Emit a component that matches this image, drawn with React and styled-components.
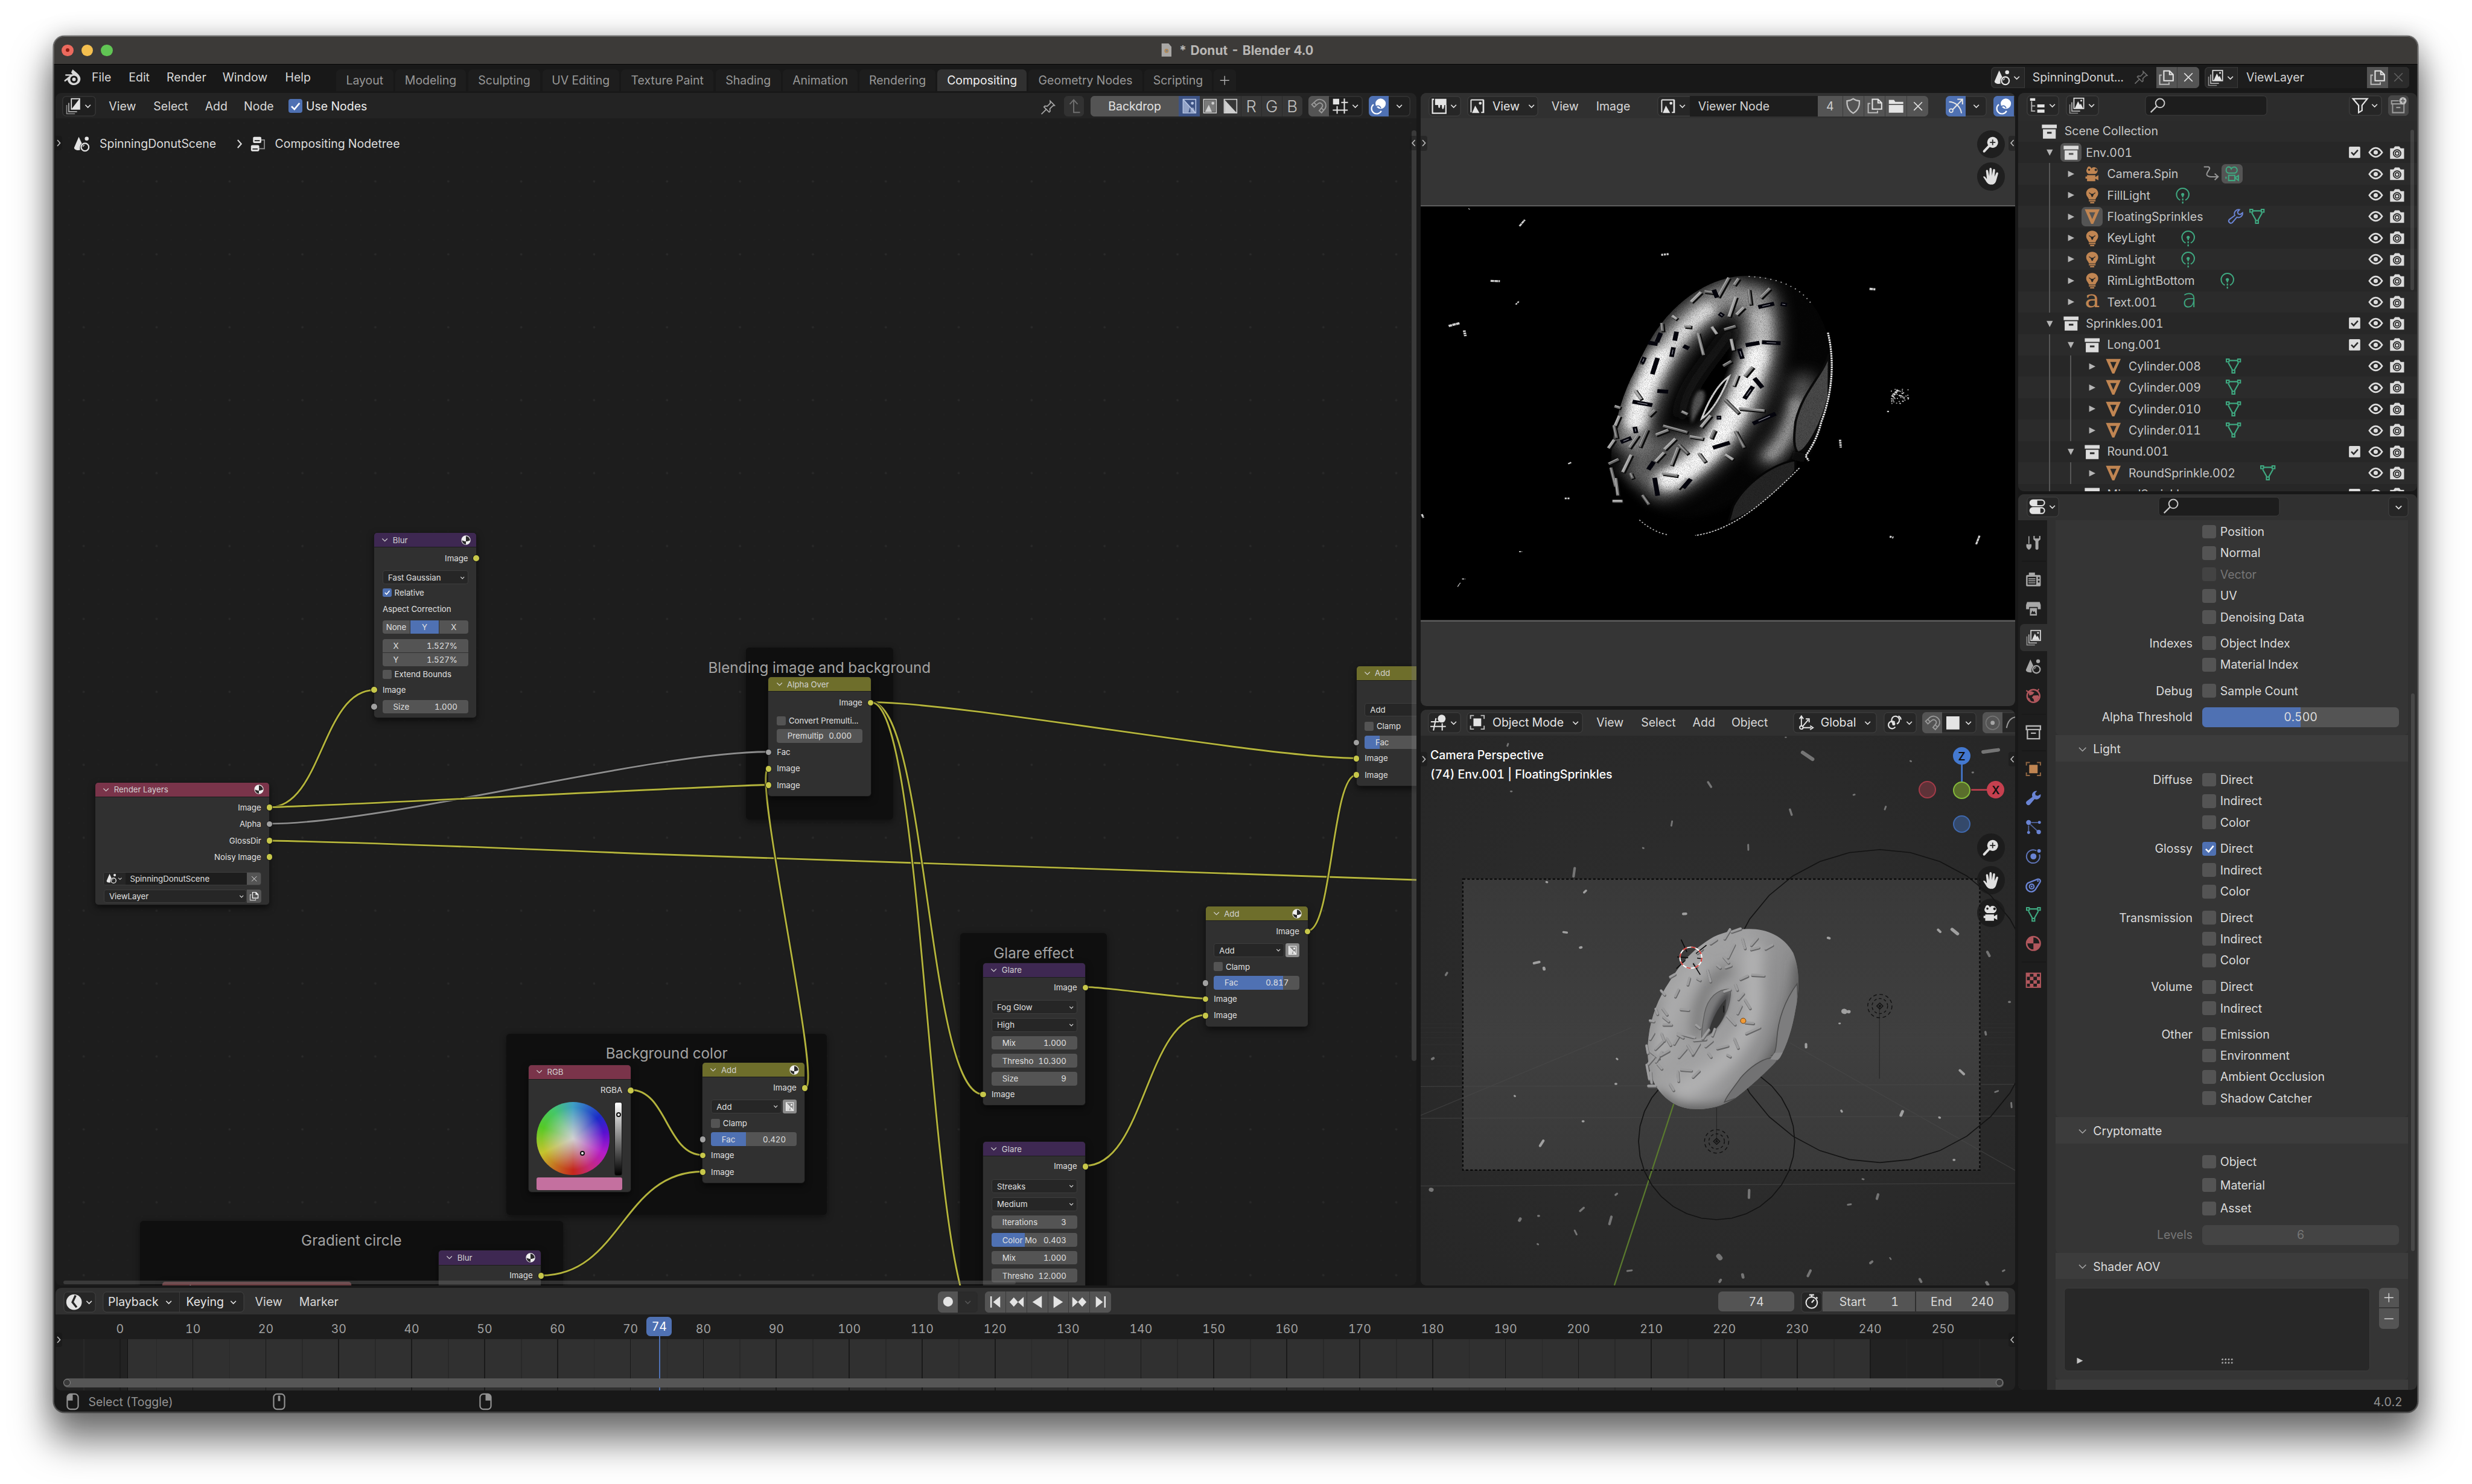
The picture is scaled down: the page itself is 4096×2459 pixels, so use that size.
import React from "react";
import styled, { createGlobalStyle } from "styled-components";

/* ---------- palette ---------- */
const BLUE = "#4f71b3";
const BTN = "#545454";
const TXT = "#dcdcdc";
const YEL = "#c7c74a";
const GRY = "#a1a1a1";
const ORANGE = "#c08552";
const GREEN = "#3fa981";
const INDIGO = "#6a84d4";
const RED = "#b1575d";

const Global = createGlobalStyle`
  html, body { margin: 0; background: #fff; overflow: hidden; }
  *, *::before, *::after { box-sizing: border-box; }
`;

const Desktop = styled.div`
  zoom: 0.805;
  width: 5089px;
  height: 3055px;
  padding: 74px 111px;
  overflow: hidden;
  background: #fff;
  font-family: Inter, "Liberation Sans", sans-serif;
  font-size: 24.2px;
  font-variant-numeric: tabular-nums;
  color: ${TXT};
  white-space: nowrap;
`;
const Win = styled.div`
  position: relative;
  display: flex;
  flex-direction: column;
  width: 4866px;
  height: 2833px;
  border-radius: 22px;
  background: #181818;
  box-shadow: 0 0 0 2px rgba(0, 0, 0, 0.45), 0 0 50px rgba(0, 0, 0, 0.22), 0 52px 74px 8px rgba(0, 0, 0, 0.52);
  &::after {
    content: "";
    position: absolute;
    inset: 0;
    border: 2px solid rgba(255, 255, 255, 0.2);
    border-radius: 22px;
    pointer-events: none;
  }
`;
const TitleBar = styled.div`
  display: flex;
  align-items: center;
  height: 59px;
  padding: 1px 16px 0;
  gap: 16.5px;
  background: #3c3a38;
  border-bottom: 2px solid #050505;
  border-radius: 22px 22px 0 0;
`;
const Light = styled.div`
  display: flex;
  align-items: center;
  justify-content: center;
  width: 24px;
  height: 24px;
  border-radius: 50%;
  background: ${(p) => p.$c};
  &::after {
    content: "";
    width: 8px;
    height: 8px;
    border-radius: 50%;
    background: ${(p) => p.$dot || "transparent"};
  }
`;
const Title = styled.div`
  display: flex;
  align-items: center;
  gap: 12px;
  margin-left: 2139px;
  font-weight: 700;
  font-size: 26px;
  color: #b9b7b5;
`;
const TopBar = styled.div`
  display: flex;
  align-items: flex-start;
  height: 55px;
  padding-top: 5px;
`;
const MenuText = styled.div`
  display: flex;
  align-items: center;
  height: 43px;
  width: ${(p) => (p.$w ? p.$w + "px" : "auto")};
  margin-left: ${(p) => p.$ml || 0}px;
  color: ${(p) => p.$c || "#d8d8d8"};
  flex: none;
`;
const Tab = styled.div`
  display: flex;
  align-items: center;
  justify-content: center;
  height: 45px;
  margin: 5px 4px 0 0;
  width: ${(p) => p.$w - 4}px;
  border-radius: 8px 8px 0 0;
  background: ${(p) => (p.$on ? "#303030" : "#1d1d1d")};
  color: ${(p) => (p.$on ? "#f0f0f0" : "#989898")};
  flex: none;
`;
const Fill = styled.div`
  flex: 1;
`;
const Main = styled.div`
  display: flex;
  gap: 6px;
  padding: 3px 2px 0 3px;
  height: 2674px;
`;
const Col = styled.div`
  display: flex;
  flex-direction: column;
  gap: ${(p) => p.$gap}px;
  width: ${(p) => p.$w}px;
  flex: none;
`;
const Row = styled.div`
  display: flex;
  gap: ${(p) => p.$gap || 0}px;
  height: ${(p) => (p.$h ? p.$h + "px" : "auto")};
`;
const Area = styled.section`
  position: relative;
  display: flex;
  flex-direction: column;
  width: ${(p) => p.$w}px;
  height: ${(p) => p.$h}px;
  background: ${(p) => p.$bg};
  border-radius: 12px;
  overflow: hidden;
  flex: none;
`;
const Header = styled.header`
  position: relative;
  z-index: 3;
  display: flex;
  align-items: flex-start;
  height: ${(p) => p.$h || 53}px;
  padding: ${(p) => p.$pt || 6}px 0 0 0;
  background: ${(p) => p.$bg};
  flex: none;
`;
const Group = styled.div`
  display: flex;
  height: 43px;
  width: ${(p) => p.$w}px;
  margin-left: ${(p) => p.$ml || 0}px;
  border-radius: 8px;
  overflow: hidden;
  background: ${(p) => p.$bg || "#262626"};
  box-shadow: inset 0 0 0 2px ${(p) => p.$line || "#3b3b3b"};
  flex: none;
`;
const Seg = styled.div`
  display: flex;
  align-items: center;
  justify-content: ${(p) => p.$j || "center"};
  gap: ${(p) => p.$gap ?? 4}px;
  height: 100%;
  width: ${(p) => p.$w}px;
  padding: 0 ${(p) => p.$px || 0}px;
  background: ${(p) => p.$bg || "transparent"};
  color: ${(p) => p.$c || "#e4e4e4"};
  border-right: ${(p) => (p.$div ? "2px solid #3b3b3b" : "0")};
  flex: none;
`;
const Check = styled.div`
  display: flex;
  align-items: center;
  justify-content: center;
  width: ${(p) => p.$s}px;
  height: ${(p) => p.$s}px;
  margin-left: ${(p) => p.$ml || 0}px;
  border-radius: ${(p) => (p.$s > 20 ? 5 : 3)}px;
  background: ${(p) => (p.$on ? BLUE : "#545454")};
  opacity: ${(p) => (p.$dim ? 0.45 : 1)};
  color: #fff;
  flex: none;
`;

/* ---------- icons (16 unit grid) ---------- */
const Svg = styled.svg`
  display: block;
  width: ${(p) => p.$s}px;
  height: ${(p) => p.$s}px;
  overflow: visible;
  flex: none;
`;
const S = { fill: "none", stroke: "currentColor", strokeWidth: 1 };
const F = { fill: "currentColor" };
const stack = (
  <>
    <path {...S} d="M3.5 5v8.5h8" opacity=".75" />
    <path {...S} d="M1.5 7v8.5h8" opacity=".55" />
  </>
);
const ICONS = {
  down: <path {...S} strokeWidth="1.7" d="M3.5 6 8 10.5 12.5 6" />,
  chev: <path {...S} strokeWidth="1.6" d="M2 5l6 6 6-6" />,
  left: <path {...S} strokeWidth="1.6" d="M10.5 3 6 8l4.5 5" />,
  right: <path {...S} strokeWidth="1.6" d="M6 3l4.500 5L6 13" />,
  check: <path {...S} strokeWidth="2.2" d="M2.500 8.500 6.500 12.500 13.500 4" />,
  x: <path {...S} strokeWidth="1.1" d="M3.500 3.500l9 9M12.500 3.500l-9 9" />,
  plus: <path {...S} strokeWidth="1.2" d="M8 1.500v13M1.500 8h13" />,
  minus: <path {...S} strokeWidth="1.2" d="M1.500 8h13" />,
  triR: <path {...F} d="M4 3.500 13 8 4 12.500z" />,
  triD: <path {...F} d="M3.500 4h9L8 13z" />,
  logo: (
    <>
      <path {...F} d="M8.200.6 10 2.100C14 5 15.700 7.500 15.500 10c-.3 3.200-3 5.300-6.100 5.300-3 0-5.700-2-6-5L.8 12.200.2 11l5.400-4.400H1.300V5.200h6.800L6.800 3.400z" />
      <circle cx="9.400" cy="10" r="3.500" fill="#181818" />
      <circle cx="9.400" cy="10" r="1.700" {...F} />
    </>
  ),
  comp: (
    <>
      {stack}
      <path {...F} fillRule="evenodd" d="M5.500.5h9v11h-9zM6.500 1.500v9l7-9z" />
    </>
  ),
  layers: (
    <>
      {stack}
      <rect {...S} x="5.500" y="1" width="9.500" height="10" />
      <path {...F} d="M6.500 10.500 9.500 4l1.800 3.500.9-1.200 2 4.200z" />
      <circle {...F} cx="12.600" cy="3.400" r=".9" />
    </>
  ),
  scene: (
    <>
      <path {...F} d="M5 1 8 7.500C6.300 9 5.700 11 6.300 13.800 3 14.400.5 13.300.5 11.500z" />
      <circle {...F} cx="12.700" cy="2.800" r="1.900" />
      <circle {...S} strokeWidth="1.300" cx="11" cy="11" r="3.700" />
      <path {...S} strokeWidth=".8" d="M9 10.600a2 2 0 0 1 1.600-1.600" />
    </>
  ),
  ntree: (
    <>
      <rect {...F} x="2.500" y="1" width="8" height="6" rx="1.200" />
      <rect {...F} x=".5" y="9" width="8" height="6" rx="1.200" />
      <path stroke="#1d1d1d" d="M4 4.800h5M2 12.800h5" />
      <path {...S} d="M10.500 4h3v8.500h-5" opacity=".6" />
    </>
  ),
  pin: (
    <path {...S} strokeWidth="1.100" d="M10 1.500l4.500 4.500-1.800.4-3 3 .2 2.600-1 .9L3.600 7.600l.9-1 2.600.2 3-3zM6 10 1 15" />
  ),
  up: <path {...S} strokeWidth="1.200" d="M14 14.500H7.500V2M3.500 6l4-4.500 4 4.500" />,
  imgAlpha: (
    <>
      <rect {...S} x="1.500" y="1" width="13" height="14" />
      <path {...F} d="M2 2v12.500h5L8.500 9 7 7zM9 10l3-.500L14 14.500H9z" opacity=".7" />
      <path {...S} d="M2 1.500 14 15" />
      <circle {...F} cx="11" cy="5" r="1.500" />
    </>
  ),
  imgColor: (
    <>
      <rect {...S} x="1.500" y="1" width="13" height="14" />
      <rect {...F} x="2.500" y="2" width="11" height="12" opacity=".45" />
      <path {...F} d="M3 14 6.800 6.500 10 14z" />
      <circle {...F} cx="11" cy="5" r="1.500" />
    </>
  ),
  alpha: (
    <>
      <rect {...S} x="1.500" y="1" width="13" height="14" />
      <path {...F} d="M2 1.500 14.500 15H2z" />
    </>
  ),
  magnet: (
    <path {...S} strokeWidth="1.100" d="M1.500 6.500 6 2.500a6 6 0 0 1 8.500 7.800L11 14.500l-2.300-2L11.500 9A2.600 2.600 0 0 0 7.800 5.500L3.800 9zM3.600 4.600l2.200 2.300M10.700 10l2.400 2" />
  ),
  snapgrid: (
    <>
      <path {...S} strokeWidth="1.200" d="M12 .8v14.500M5 8v7.500M.8 12h14.500M9 4.500h6.500" />
      <rect {...F} x="1" y="1" width="6" height="5.500" />
    </>
  ),
  overlay: (
    <>
      <circle {...F} cx="10.300" cy="5.700" r="5" />
      <path {...S} strokeWidth="1.300" d="M3.500 6.500a5 5 0 1 0 7.500 6.200" />
      <path stroke="#4f71b3" strokeWidth="1" fill="none" d="M5.500 9c1.500-2 4-1.500 5 1" />
    </>
  ),
  imgEd: (
    <>
      <path {...S} strokeWidth="1.300" d="M3 1.500H1.500v13.500h13V7" />
      <path {...F} d="M4 1h11v6h-2c-.3 3-.8 4-1.500 4s-.8-1.500-1-4H9c0 2-.4 3-1 3s-1-1-1-3H4z" />
    </>
  ),
  img: (
    <>
      <path {...S} strokeWidth="1.200" d="M3.500 1.500H14v13h-2M1.500 4v10.500M1.500 1.500V4M1.500 1.500h3M14.500 1.500v13H12" />
      <path {...F} d="M2.500 15 5.800 7.500 10.200 15z" />
      <circle {...F} cx="11" cy="5" r="1.500" />
    </>
  ),
  shield: <path {...S} strokeWidth="1.300" d="M8 1C6 2.500 4 3 2 3c-.3 5 1.500 9.500 6 12 4.500-2.500 6.300-7 6-12-2 0-4-.5-6-2z" opacity=".75" />,
  dup: (
    <>
      <path {...S} strokeWidth="1.200" d="M5.500 1.500h5.500l3.500 3.500v6h-9zM11 1.500V5h3.500" />
      <path {...S} strokeWidth="1.200" d="M3.500 5.500h-2v9h9v-2" opacity=".7" />
    </>
  ),
  folder: <path {...F} d="M1 2h5l1.200 2H15v2H1zM1 7h14v7.500H1z" />,
  gizmo: (
    <>
      <path {...S} strokeWidth="1.200" d="M3.500 13 14 2M9.500 1.500H14.500V6.500M1.500 4c6 0 11 4.500 12 11" />
      <circle {...S} fill={BLUE} cx="3.500" cy="12.500" r="1.700" />
    </>
  ),
  zoom: (
    <>
      <circle {...F} cx="9.800" cy="6" r="5" />
      <path {...S} strokeWidth="2.200" strokeLinecap="round" d="M6.300 9.600 2 14.200" />
      <path stroke="#262626" strokeWidth="1" d="M9.800 3.500v5M7.300 6h5" />
    </>
  ),
  hand: (
    <path {...F} d="M1 8.500c1-.7 2 0 2.500 1l.9 1L3.600 3.500c-.1-1.400 1.700-1.500 1.900-.2L6.500 8 6.700 1.700c0-1.500 1.900-1.500 2 0l.2 6 .9-5.200c.2-1.300 2-1.100 1.900.3l-.5 5.700 1.500-3.300c.5-1.100 2-.5 1.700.7l-1.600 5.600c-.7 2.600-2 4-4.500 4-2.700 0-4-1.600-5-3.500z" />
  ),
  cam: (
    <>
      <path {...F} fillRule="evenodd" d="M4.500 1a2.800 2.800 0 0 1 2.700 2 3.400 3.400 0 1 1 3.800 5.300H4.500A3.300 3.300 0 0 1 3 3.200 2.900 2.900 0 0 1 4.500 1zM5 3.200a1 1 0 1 0 .01 0zM11.500 3.200a1.200 1.200 0 1 0 .01 0z" />
      <path {...F} d="M3 9.500h8v1.700l3-1.700v5l-3-1.700v2.500H3v-2.500H1.500v-2H3z" />
    </>
  ),
  camData: (
    <path {...S} strokeWidth="1.200" d="M4.500 1.500c1.300 0 2.200.8 2.600 1.900a3 3 0 1 1 3.700 4.100H4.300A2.700 2.700 0 0 1 2.200 4.200 2.600 2.600 0 0 1 4.500 1.500zM5 4.500h.1M11 4.500h.1M4.500 9.700h6v5h-6zM10.500 12l3.500-2v4.500zM2 11v2" />
  ),
  outl: (
    <>
      <path {...F} d="M1 1h5v2.500H1zM8 7h7v3H8zM8 12h7v3H8z" />
      <path {...S} strokeWidth="1.200" d="M2.500 4v9.500H6M2.500 8.500H6" opacity=".7" />
    </>
  ),
  search: (
    <>
      <circle {...S} strokeWidth="1.200" cx="10" cy="5.800" r="4.300" />
      <path {...S} strokeWidth="1.300" d="M6.700 9 1 14.700" />
    </>
  ),
  filter: <path {...S} strokeWidth="1.300" d="M1 1.500h14L9.800 8v5L6.500 15V8z" />,
  newcol: (
    <>
      <path {...S} strokeWidth="1.200" d="M8 3.500H1v3h13M2 6.500V15h11V6.500M5.500 10h4" opacity=".7" />
      <circle {...F} cx="12" cy="3.500" r="3.500" />
      <path stroke="#545454" d="M12 1.500v4M10 3.500h4" />
    </>
  ),
  coll: (
    <path {...F} fillRule="evenodd" d="M.8 1.500h14.400v3.500H.8zM1.800 6h12.400v9H1.800zM5.800 8.500v1.700h4.400V8.500z" />
  ),
  collO: <path {...S} strokeWidth="1.400" d="M1 1.800h14v3.500H1zM2 5.500v9h12v-9M5.500 9h5" />,
  bulb: (
    <>
      <path {...F} fillRule="evenodd" d="M8 .8c3.300 0 5.800 2.300 5.800 5.200 0 2.700-1.800 3.600-2.600 6H4.800C4 9.600 2.200 8.700 2.200 6 2.200 3.100 4.700.8 8 .8zM5 5v1l1.500 1 1 2.500h1L9.500 7 11 6V5l-2 1.500H7z" />
      <path {...F} d="M4.800 12.600h6.400v1.300H4.800zM6 14.500h4v1.300H6z" />
    </>
  ),
  lampData: (
    <>
      <path {...S} strokeWidth="1.200" d="M5.500 12.600a6 6 0 1 1 5 0" />
      <circle {...F} cx="8" cy="7.200" r="1.500" />
      <path {...S} strokeWidth="1.300" strokeDasharray="2 1" d="M8 8v8" />
    </>
  ),
  tri: <path {...F} fillRule="evenodd" d="M.8 1h14.400L9 15.200H7zM5 3.900 8 10.500l3-6.600z" />,
  mesh: (
    <>
      <path {...S} strokeWidth="1.300" d="M4 2.500h8M3 4.500 7.200 12M13 4.500 8.800 12" />
      <path {...S} strokeWidth="1.200" d="M1.200 1.200h2.600v2.600H1.200zM12.200 1.200h2.600v2.600h-2.600zM6.700 12h2.600v2.600H6.700z" />
    </>
  ),
  wrenchO: (
    <path {...S} strokeWidth="1.200" d="M14.500 4.500a4 4 0 0 1-5.500 4.200L4.500 14A2.100 2.100 0 0 1 1.600 11L7 7a4 4 0 0 1 4.500-5.600L9.700 3.500l.6 2 2 .6z" />
  ),
  wrench: (
    <path {...F} d="M15.200 4.200a4.300 4.300 0 0 1-6 4.800L4.600 14.400A2.200 2.200 0 0 1 1.400 11.200L7 7a4.300 4.300 0 0 1 4.600-6L9.700 3.200l.5 2.100 2.200.6z" />
  ),
  path: <path {...S} strokeWidth="1.200" d="M1 1.500h4.500C9 3 2.500 7 4 9.500c1.500 2.300 5 1.500 10.500 1.500M11.500 8l3.300 3-3.300 3.200" opacity=".8" />,
  eye: (
    <>
      <path {...S} strokeWidth="1.700" d="M1.200 8C3.500 4.500 5.500 3.300 8 3.300S12.500 4.500 14.800 8C12.500 11.500 10.500 12.700 8 12.700S3.500 11.500 1.200 8z" />
      <circle {...F} cx="8" cy="8" r="2.300" />
    </>
  ),
  photo: (
    <>
      <path {...F} d="M.8 3.500h3.500L5.800 1.500h4.400l1.500 2h3.500v11H.8z" />
      <circle cx="8" cy="8.800" r="3.800" fill="none" stroke="#2a2a2a" strokeWidth="1.100" />
      <circle cx="8" cy="8.800" r="1.900" fill="none" stroke="#2a2a2a" strokeWidth="1" />
    </>
  ),
  boxcheck: (
    <>
      <rect {...F} x="2" y="2" width="12" height="12" rx="1" />
      <path stroke="#2a2a2a" strokeWidth="1.600" fill="none" d="M4.500 8l2.500 2.500 4.500-5" />
    </>
  ),
  propEd: (
    <>
      <rect {...S} strokeWidth="1.200" x="1" y="1.500" width="14" height="5.500" rx="2.700" />
      <path {...F} d="M3.700 1.500H8v5.500H3.700a2.700 2.700 0 0 1 0-5.500z" />
      <rect {...S} strokeWidth="1.200" x="1" y="9" width="14" height="5.500" rx="2.700" />
      <path {...F} d="M3.700 9H11v5.500H3.700a2.700 2.700 0 0 1 0-5.500z" />
    </>
  ),
  tool: (
    <>
      <path {...S} strokeWidth="1" d="M3.500 1.500V9" />
      <path {...F} d="M1 9.500h5c.4 2.500-.3 4.500-2.500 5.500C1.300 14 .6 12 1 9.500z" />
      <path {...F} d="M8 1.200v3.500l2 1.800v7.300c.3 1.600 2.700 1.600 3 0V6.500l2-1.800V1.200h-1.300v2.600h-4.400V1.200z" />
    </>
  ),
  render: (
    <path {...F} fillRule="evenodd" d="M3.500 1h6v2.500H14c.8 0 1.300.5 1.300 1.300v8.700c0 .8-.5 1.300-1.300 1.300H2c-.8 0-1.300-.5-1.300-1.300V4.800c0-.8.5-1.300 1.300-1.300h1.500zM2.200 5.200v7.900h8.600V5.200zM12.500 5.500v2h1.600v-2zM12.500 9v2h1.600V9zM3 6.800h7v1H3zm0 2h7v1H3zm0 2h7v1H3z" />
  ),
  output: (
    <path {...F} fillRule="evenodd" d="M1.700 1.500h12.600l1 3v4.200h-3V6.500H3.700v2.200h-3V4.500zM4.500 7.500h7V15h-7zM5.500 13.500h5l-1.500-3-1 1.200-1-1.700z" />
  ),
  world: (
    <>
      <circle {...S} strokeWidth="1.500" cx="8" cy="8" r="6.300" />
      <path {...F} d="M3 3.700 6 3.300l3 1.200-2 2.200-3 .8zM8 7.500l4.500-.3 1.400 2-2.900 4-2.300.4-.5-2.500L6.500 9.500zM1.500 9.500l2.500.7L5.500 13z" />
      <path {...S} strokeWidth="1.200" d="M.8 2.500 3 4M13.500 1 12 3" />
    </>
  ),
  object: (
    <>
      <rect {...F} x="3.800" y="3.800" width="8.400" height="8.400" />
      <path {...S} strokeWidth="1.200" opacity=".7" d="M1 4.500V1.500h3.500M11.500 1.500H15v3M15 11.500v3h-3.500M4.500 14.500H1v-3" />
    </>
  ),
  particles: (
    <>
      <circle {...F} cx="3.200" cy="3.500" r="2.500" />
      <circle {...F} cx="14" cy="3.500" r="1.500" />
      <circle {...F} cx="3.200" cy="13.500" r="1.500" />
      <circle {...F} cx="13.300" cy="13" r="2.200" />
      <path {...S} strokeWidth="1.100" opacity=".7" d="M6 3.500h6.500M3.200 6.500v5.500M5 5.500l7 6.500" />
    </>
  ),
  physics: (
    <>
      <circle {...F} cx="8" cy="8.500" r="3" />
      <circle {...F} cx="13.600" cy="3" r="1.800" />
      <path {...S} strokeWidth="1.200" d="M11 2.800A6.600 6.600 0 1 0 14 6.500" opacity=".85" />
    </>
  ),
  constraints: (
    <>
      <path {...S} strokeWidth="1.400" d="M2.500 5.500 12 1.700c2.500-.5 3.700 1.500 2.300 3.500L10 12A5 5 0 1 1 2.500 5.500z" />
      <circle {...S} strokeWidth="1.300" cx="6.300" cy="9" r="2.300" />
      <circle {...F} cx="6.300" cy="9" r=".9" />
      <circle {...F} cx="12.500" cy="3.500" r=".9" />
    </>
  ),
  material: (
    <>
      <circle {...S} strokeWidth="1.500" cx="8" cy="8" r="6.800" />
      <path {...F} d="M8 1.200A6.800 6.800 0 0 0 1.200 8H8zM8 8v6.800A6.800 6.800 0 0 0 14.800 8z" />
    </>
  ),
  ball: (
    <>
      <circle {...S} strokeWidth="1.300" cx="8" cy="8" r="7" />
      <path {...F} d="M8 1A7 7 0 0 0 1 8c2 1.300 4.500 2 7 2zM8 10v5a7 7 0 0 0 7-7c-2 1.300-4.500 2-7 2z" />
      <path fill="#2a2a2a" d="M1.500 8.500c2 1.200 4.200 1.700 6.500 1.700v4.600a6.800 6.800 0 0 1-6.500-6.300zM8 1.500v8.700c2.300 0 4.500-.5 6.500-1.700A6.600 6.600 0 0 0 8 1.500z" />
      <path {...F} d="M8 10.200c2.300 0 4.500-.5 6.500-1.700A6.700 6.700 0 0 1 8 14.800z" />
    </>
  ),
  texture: (
    <>
      <rect {...S} strokeWidth="1.200" x="1" y="1" width="14" height="14" />
      <path {...F} d="M1 1h3.500v3.500H1zM8 1h3.500v3.500H8zM4.500 4.500H8V8H4.500zM11.500 4.500H15V8h-3.500zM1 8h3.500v3.500H1zM8 8h3.500v3.500H8zM4.500 11.500H8V15H4.500zM11.500 11.500H15V15h-3.500z" />
    </>
  ),
  view3d: (
    <>
      <path {...S} strokeWidth="1.200" d="M.5 7h8M0 11.500h15M5.500 3.500 3 15.500M11.500 8.500v7" />
      <circle {...F} cx="11" cy="4" r="3.800" />
    </>
  ),
  objmode: (
    <>
      <rect {...F} x="4" y="4" width="8" height="8" />
      <path {...S} strokeWidth="1.200" opacity=".8" d="M1 4.500V1h3.500M11.500 1H15v3.500M15 11.500V15h-3.500M4.500 15H1v-3.500" />
    </>
  ),
  orient: (
    <>
      <path {...S} strokeWidth="1.200" d="M3 2v9.500M5 13.500h8M4 12.500l6-7M1 4.500 3 1.500l2 3M12 11.500l3 2-3 2M7.500 4.500h3.500v3.500" />
      <circle {...S} strokeWidth="1.200" cx="3" cy="13.300" r="1.700" />
    </>
  ),
  pivot: (
    <>
      <path {...S} strokeWidth="1.300" d="M8.500 7.500A3.600 3.600 0 1 0 9 12M7 8.500A3.800 3.800 0 1 1 10.500 9" />
      <circle {...F} cx="7.500" cy="9" r="1.500" />
      <path {...S} strokeWidth="1.200" d="M12 1.500A4 4 0 0 1 14.500 5" />
    </>
  ),
  square: <rect {...F} x="0" y="0" width="16" height="16" />,
  prop: (
    <>
      <circle {...S} cx="8" cy="8" r="6.500" opacity=".4" />
      <circle {...F} cx="8" cy="8" r="2" />
    </>
  ),
  curve: <path {...S} strokeWidth="1.200" d="M1 13C3 3 8 2 15 2" opacity=".6" />,
  clock: (
    <>
      <circle {...F} cx="8" cy="8" r="7.500" />
      <path d="M9.500 1.500 6.500 8l4 5" fill="none" stroke="#262626" strokeWidth="2" />
    </>
  ),
  rec: <circle {...F} cx="8" cy="8" r="5" />,
  first: <path {...F} d="M2.500 2h1.600v12H2.500zM13 2v12L5.500 8z" />,
  prevk: <path {...F} d="M5 3 9.500 8 5 13 .5 8zM15.500 2.500v11L9.500 8z" />,
  playr: <path {...F} d="M13 1.500v13L3 8z" />,
  play: <path {...F} d="M3 1.500v13L13 8z" />,
  nextk: <path {...F} d="M11 3 15.500 8 11 13 6.500 8zM.5 2.500v11L6.500 8z" />,
  last: <path {...F} d="M13.500 2h-1.600v12h1.600zM3 2v12L10.500 8z" />,
  stopw: (
    <>
      <circle {...S} strokeWidth="1.300" cx="8" cy="9" r="5.800" />
      <path {...S} strokeWidth="1.500" d="M5.500 1h5M8 1v2.500M8 9l2.500-3M12.500 3.500l1.500 1.200" />
    </>
  ),
  mouseL: (
    <>
      <rect {...S} strokeWidth="1.200" x="3" y="1" width="10" height="14" rx="3" />
      <path {...F} d="M3 7V4a3 3 0 0 1 3-3h2v6z" />
    </>
  ),
  mouseM: (
    <>
      <rect {...S} strokeWidth="1.200" x="3" y="1" width="10" height="14" rx="3" />
      <rect {...F} x="7" y="2.500" width="2" height="5" />
    </>
  ),
  mouseR: (
    <>
      <rect {...S} strokeWidth="1.200" x="3" y="1" width="10" height="14" rx="3" />
      <path {...F} d="M13 7V4a3 3 0 0 0-3-3H8v6z" />
    </>
  ),
  file: (
    <>
      <path fill="#a9a7a5" d="M2 0h8.500L14 4v12H2z" />
      <circle cx="8" cy="9" r="2.600" fill="#b08a5a" />
      <circle cx="8.300" cy="9" r="1" fill="#6d7f92" />
    </>
  ),
};
const Icon = ({ n, s = 34, c }) => (
  <Svg viewBox="0 0 16 16" $s={s} style={c ? { color: c } : undefined}>
    {ICONS[n]}
  </Svg>
);
const Drop = ({ n, w = 68, ml, bg, line }) => (
  <Group $w={w} $ml={ml} $bg={bg} $line={line}>
    <Seg $w={w}>
      <Icon n={n} />
      <Icon n="down" s={19} />
    </Seg>
  </Group>
);

/* ---------- node canvas ---------- */
const Canvas = styled.div`
  position: relative;
  flex: 1;
  overflow: hidden;
  background: radial-gradient(circle at 3px 3px, #292929 0 2px, transparent 2.800px) 55px 127px / 150.100px 150.100px,
    radial-gradient(circle at 3px 3px, #1f1f1f 0 1.500px, transparent 2.500px) 25px 97px / 30.020px 30.020px, #1d1d1d;
`;
const Links = styled.svg`
  position: absolute;
  inset: 0;
  width: 2802px;
  height: 2402px;
  overflow: visible;
`;
const Frame = styled.div`
  position: absolute;
  left: ${(p) => p.$x - 114}px;
  top: ${(p) => p.$y - 244}px;
  width: ${(p) => p.$w}px;
  height: ${(p) => p.$h}px;
  display: flex;
  justify-content: center;
  padding-top: ${(p) => p.$pt}px;
  border-radius: 7px;
  background: #0f0f0f;
  box-shadow: 0 4px 14px rgba(0, 0, 0, 0.45);
  color: #a3a3a3;
  font-size: 30.1px;
  line-height: 38px;
  white-space: nowrap;
`;
const NodeBox = styled.div`
  position: absolute;
  left: ${(p) => p.$x - 114}px;
  top: ${(p) => p.$y - 244}px;
  width: ${(p) => p.$w || 210}px;
  height: ${(p) => p.$h}px;
  display: flex;
  flex-direction: column;
  border-radius: 6px;
  background: #303030;
  box-shadow: 0 0 0 1px #181818, 0 5px 14px rgba(0, 0, 0, 0.6);
  font-size: 16.500px;
  color: #e0e0e0;
`;
const NodeHead = styled.div`
  display: flex;
  align-items: center;
  gap: 9px;
  height: 30px;
  padding: 0 12px 0 15px;
  border-radius: 6px 6px 0 0;
  background: ${(p) => p.$c};
  border-bottom: 1px solid #1c1c1c;
  color: #d2d2d2;
  flex: none;
`;
const NRow = styled.div`
  position: relative;
  display: flex;
  align-items: center;
  justify-content: ${(p) => (p.$out ? "flex-end" : "flex-start")};
  gap: ${(p) => p.$gap ?? 6}px;
  height: ${(p) => p.$h || 34}px;
  margin: ${(p) => p.$mt || 0}px 17px 0;
  flex: none;
`;
const Dot = styled.i`
  position: absolute;
  top: calc(50% - 5.500px);
  ${(p) => (p.$out ? "right: -23px;" : "left: -23px;")}
  width: 12px;
  height: 12px;
  border-radius: 50%;
  background: ${(p) => p.$c || YEL};
  box-shadow: 0 0 0 1px #161616;
`;
const Field = styled.div`
  display: flex;
  align-items: center;
  justify-content: space-between;
  flex: 1;
  height: 100%;
  padding: 0 22px;
  border-radius: ${(p) => p.$r || "5px"};
  background: ${(p) => (p.$fill ? `linear-gradient(90deg, ${BLUE} ${p.$fill}%, #545454 ${p.$fill}%)` : "#545454")};
`;
const Pick = styled.div`
  display: flex;
  align-items: center;
  justify-content: space-between;
  flex: 1;
  height: 100%;
  padding: 0 4px 0 10px;
  border-radius: 5px;
  background: #262626;
  border: 1.500px solid #3d3d3d;
`;
const Mini = styled.div`
  display: flex;
  align-items: center;
  justify-content: center;
  width: ${(p) => p.$w}px;
  height: 100%;
  background: ${(p) => p.$bg || "#545454"};
  border-radius: ${(p) => p.$r || 0};
  flex: none;
`;
const NHead = ({ t, c, ball }) => (
  <NodeHead $c={c}>
    <Icon n="chev" s={14} />
    {t}
    {ball && (
      <>
        <Fill />
        <Icon n="ball" s={20} c="#eee" />
      </>
    )}
  </NodeHead>
);
const Out = ({ t, c, mt }) => (
  <NRow $out $mt={mt}>
    {t}
    <Dot $out $c={c} />
  </NRow>
);
const In = ({ t, c, mt }) => (
  <NRow $mt={mt}>
    {t}
    <Dot $c={c} />
  </NRow>
);
const NPick = ({ t, mt }) => (
  <NRow $h={28.500} $mt={mt}>
    <Pick>
      {t}
      <Icon n="down" s={13} />
    </Pick>
  </NRow>
);
const NField = ({ l, v, mt, fill, r, h = 28, sock }) => (
  <NRow $h={h} $mt={mt}>
    {sock && <Dot $c={GRY} />}
    <Field $fill={fill} $r={r}>
      <span>{l}</span>
      <span>{v}</span>
    </Field>
  </NRow>
);
const NCheck = ({ t, on, mt }) => (
  <NRow $h={20} $mt={mt}>
    <Check $s={18.500} $on={on}>
      {on && <Icon n="check" s={14} />}
    </Check>
    {t}
  </NRow>
);
const AddNode = ({ x, y, fill, v }) => (
  <NodeBox $x={x} $y={y} $h={247}>
    <NHead t="Add" c="#6e6e2b" ball />
    <Out t="Image" mt={4} />
    <NRow $h={28} $mt={8} $gap={3}>
      <Pick>
        Add
        <Icon n="down" s={13} />
      </Pick>
      <Mini $w={28} $bg="#8b8b8b" $r="4px">
        <Icon n="imgAlpha" s={19} c="#fff" />
      </Mini>
    </NRow>
    <NCheck t="Clamp" mt={10} />
    <NField l="Fac" v={v} mt={9} fill={fill} sock />
    <In t="Image" mt={2} />
    <In t="Image" />
  </NodeBox>
);
const Wheel = styled.div`
  position: relative;
  width: 150px;
  height: 150px;
  border-radius: 50%;
  background: radial-gradient(closest-side, #d0d0d0 0%, rgba(205, 205, 205, 0.7) 28%, rgba(200, 200, 200, 0) 85%),
    conic-gradient(#3f9fc4, #1c2cc8 50deg, #5a10d0 80deg, #b51cc9 115deg, #c42a7a 150deg, #c4281c 180deg, #c46a20 210deg, #c4c42e 245deg, #55c926 290deg, #45c768 325deg, #3f9fc4);
  flex: none;
`;
const ValueBar = styled.div`
  position: relative;
  width: 18px;
  height: 151px;
  border: 1.500px solid #191919;
  border-radius: 4px;
  background: linear-gradient(#fff, #000);
`;
const Knob = styled.i`
  position: absolute;
  left: ${(p) => p.$x}px;
  top: ${(p) => p.$y}px;
  width: 10px;
  height: 10px;
  border-radius: 50%;
  background: #fff;
  border: 2.500px solid #111;
`;
const Swatch = styled.div`
  flex: 1;
  height: 100%;
  border-radius: 4px;
  background: #c4709f;
`;
/* handles shorten when the two sockets are nearly level */
const bez = (x0, y0, x1, y1) => {
  const dx = Math.abs(x1 - x0);
  const slope = Math.abs(y1 - y0) / dx;
  const d = 0.5 * dx * Math.min(1, slope * 3.25);
  return `M${x0 - 114} ${y0 - 244}C${x0 + d - 114} ${y0 - 244} ${x1 - d - 114} ${y1 - 244} ${x1 - 114} ${y1 - 244}`;
};
const LINKS = [
  [bez(555, 1662, 770, 1421)],
  [bez(555, 1696, 1582, 1548), 1],
  [bez(555, 1662, 1582, 1616)],
  ["M441 1487C620 1490 900 1501 1210 1514C1700 1531 2300 1550 2810 1568"],
  [bez(1657, 2240, 1582, 1582)],
  [bez(1793, 1446, 2791, 1561)],
  [bez(1793, 1446, 2023, 2253)],
  [bez(1793, 1446, 2023, 2734)],
  [bez(2233, 2032, 2482, 2056)],
  [bez(2233, 2400, 2482, 2090)],
  [bez(2692, 1916, 2791, 1596)],
  [bez(1298, 2244, 1446, 2378)],
  [bez(1113, 2626, 1446, 2412)],
];
const ScrollV = styled.i`
  position: absolute;
  left: ${(p) => p.$x}px;
  top: ${(p) => p.$y}px;
  width: ${(p) => p.$w}px;
  height: ${(p) => p.$h}px;
  border-radius: 5px;
  background: rgba(120, 120, 120, 0.32);
`;
const Crumbs = styled.div`
  position: absolute;
  left: 2px;
  top: 34px;
  display: flex;
  align-items: center;
  height: 36px;
`;
const Edge = styled.div`
  position: absolute;
  ${(p) => (p.$right ? "right: -2px" : "left: -2px")};
  top: ${(p) => p.$y}px;
  z-index: 4;
  display: flex;
  align-items: center;
  justify-content: center;
  width: 16px;
  height: 30px;
  color: #bdbdbd;
  background: rgba(20, 20, 20, 0.4);
  border-radius: 5px;
`;
const Crumb = styled.span`
  width: ${(p) => p.$w}px;
  margin-left: ${(p) => p.$ml}px;
`;

const NodeEditor = () => (
  <Area $w={2802} $h={2455} $bg="#1d1d1d">
    <Header $bg="#232323">
      <Drop n="comp" w={69} ml={14} bg="#1f1f1f" line="#343434" />
      <MenuText $ml={27} $w={92}>View</MenuText>
      <MenuText $w={106}>Select</MenuText>
      <MenuText $w={80}>Add</MenuText>
      <MenuText $w={92}>Node</MenuText>
      <MenuText $w={36}>
        <Check $s={28.500} $on>
          <Icon n="check" s={24} />
        </Check>
      </MenuText>
      <MenuText $c="#ededed">Use Nodes</MenuText>
      <Fill />
      <Seg $w={32} $c="#a5a5a5">
        <Icon n="pin" s={32} />
      </Seg>
      <Group $w={41} $ml={17} $bg="#323232" $line="#323232">
        <Seg $w={41} $c="#707070">
          <Icon n="up" s={32} />
        </Seg>
      </Group>
      <Group $w={436} $ml={13} $bg="#363636" $line="#363636">
        <Seg $w={182} $bg="#545454">Backdrop</Seg>
        <Seg $w={43} $bg="#3d5384" $c="#b8c6e4">
          <Icon n="imgAlpha" s={32} />
        </Seg>
        <Seg $w={42}>
          <Icon n="imgColor" s={32} c="#cfcfcf" />
        </Seg>
        <Seg $w={42}>
          <Icon n="alpha" s={32} c="#cfcfcf" />
        </Seg>
        {["R", "G", "B"].map((l) => (
          <Channel key={l}>{l}</Channel>
        ))}
      </Group>
      <Group $w={111.500} $ml={13} $bg="#1f1f1f" $line="#343434">
        <Seg $w={42} $bg="#545454" $c="#9a9a9a">
          <Icon n="magnet" />
        </Seg>
        <Seg $w={69.500}>
          <Icon n="snapgrid" />
          <Icon n="down" s={19} />
        </Seg>
      </Group>
      <Group $w={86.500} $ml={12} $bg="#1f1f1f" $line="#343434">
        <Seg $w={41} $bg={BLUE} $c="#fff">
          <Icon n="overlay" />
        </Seg>
        <Seg $w={45}>
          <Icon n="down" s={19} />
        </Seg>
      </Group>
      <Pad12 />
    </Header>
    <Canvas>
      <Frame $x={1535.500} $y={1332.500} $w={302.500} $h={354} $pt={24}>Blending image and background</Frame>
      <Frame $x={1042} $y={2128} $w={660.500} $h={373} $pt={22}>Background color</Frame>
      <Frame $x={1977} $y={1920} $w={301.500} $h={760} $pt={24}>Glare effect</Frame>
      <Frame $x={288} $y={2513} $w={871} $h={200} $pt={23}>Gradient circle</Frame>
      <Links viewBox="0 0 2802 2402">
        {LINKS.map(([d, g], i) => (
          <g key={i} fill="none">
            <path d={d} stroke="#131313" strokeWidth="6" />
            <path d={d} stroke={g ? "#8b8b8b" : "#b4b43c"} strokeWidth="3.600" />
          </g>
        ))}
      </Links>

      <NodeBox $x={770.500} $y={1097} $h={379.500}>
        <NHead t="Blur" c="#3e2852" ball />
        <Out t="Image" mt={5} />
        <NPick t="Fast Gaussian" mt={8.500} />
        <NCheck t="Relative" on mt={7} />
        <NRow $h={26} $mt={11}>Aspect Correction</NRow>
        <NRow $h={27} $mt={10.500} $gap={1.500}>
          <Mini $w={56} $r="5px 0 0 5px">None</Mini>
          <Mini $w={58} $bg={BLUE}>Y</Mini>
          <Mini $w={59} $r="0 5px 5px 0">X</Mini>
        </NRow>
        <NField l="X" v="1.527%" mt={11} h={27} r="5px 5px 0 0" />
        <NField l="Y" v="1.527%" mt={1.500} r="0 0 5px 5px" />
        <NCheck t="Extend Bounds" mt={6} />
        <In t="Image" mt={5} />
        <NField l="Size" v="1.000" mt={4} h={27} sock />
      </NodeBox>

      <NodeBox $x={196.500} $y={1611} $w={358} $h={251.500}>
        <NHead t="Render Layers" c="#7a344a" ball />
        <Out t="Image" mt={4} />
        <Out t="Alpha" c={GRY} />
        <Out t="GlossDir" />
        <Out t="Noisy Image" />
        <NRow $h={28} $mt={14} $gap={0}>
          <RLBox>
            <Mini $w={45} $bg="#262626">
              <Icon n="scene" s={22} c="#e4e4e4" />
              <Icon n="down" s={12} />
            </Mini>
            <RLName>SpinningDonutScene</RLName>
            <Mini $w={29}>
              <Icon n="x" s={18} />
            </Mini>
          </RLBox>
        </NRow>
        <NRow $h={28} $mt={8} $gap={0}>
          <Pick>
            ViewLayer
            <Icon n="down" s={13} />
          </Pick>
          <Mini $w={29} $r="0 5px 5px 0">
            <Icon n="dup" s={20} c="#fff" />
          </Mini>
        </NRow>
      </NodeBox>

      <NodeBox $x={1582} $y={1394} $h={245}>
        <NHead t="Alpha Over" c="#6e6e2b" />
        <Out t="Image" mt={5} />
        <NCheck t="Convert Premulti..." mt={10.500} />
        <NField l="Premultip" v="0.000" mt={7.500} />
        <In t="Fac" c={GRY} mt={2} />
        <In t="Image" />
        <In t="Image" />
      </NodeBox>

      <NodeBox $x={1088} $y={2192} $h={262}>
        <NHead t="RGB" c="#7a344a" />
        <Out t="RGBA" mt={5} />
        <NRow $h={151} $mt={7.500} $gap={10}>
          <Wheel>
            <Knob $x={89} $y={100} />
          </Wheel>
          <ValueBar>
            <Knob $x={2.500} $y={20} />
          </ValueBar>
        </NRow>
        <NRow $h={26.500} $mt={4}>
          <Swatch />
        </NRow>
      </NodeBox>

      <AddNode x={1446.500} y={2188} fill={41} v="0.420" />
      <AddNode x={2481.500} y={1866} fill={81} v="0.817" />
      <AddNode x={2792} y={1371} fill={17.500} v="0.175" />

      <NodeBox $x={2024} $y={1982.500} $h={292}>
        <NHead t="Glare" c="#3e2852" />
        <Out t="Image" mt={3} />
        <NPick t="Fog Glow" mt={9.500} />
        <NPick t="High" mt={8} />
        <NField l="Mix" v="1.000" mt={9} />
        <NField l="Thresho" v="10.300" mt={8.500} />
        <NField l="Size" v="9" mt={9} />
        <In t="Image" mt={1} />
      </NodeBox>

      <NodeBox $x={2024} $y={2350.500} $h={340}>
        <NHead t="Glare" c="#3e2852" />
        <Out t="Image" mt={3} />
        <NPick t="Streaks" mt={10} />
        <NPick t="Medium" mt={8.500} />
        <NField l="Iterations" v="3" mt={8.500} />
        <NField l="Color Mo" v="0.403" mt={9} fill={39} />
        <NField l="Mix" v="1.000" mt={8.500} />
        <NField l="Thresho" v="12.000" mt={9} />
      </NodeBox>

      <NodeBox $x={903.500} $y={2574.500} $h={200}>
        <NHead t="Blur" c="#3e2852" ball />
        <Out t="Image" mt={4} />
      </NodeBox>
      <NodeBox $x={334} $y={2638} $w={389} $h={100}>
        <NHead t="Ellipse Mask" c="#6b3c40" />
      </NodeBox>

      <ScrollV $x={2792} $y={24} $w={9} $h={1916} />
      <ScrollV $x={17} $y={2392} $w={1960} $h={7} />
      <Crumbs>
        <Crumb $w={35} $ml={35}>
          <Icon n="scene" c="#e4e4e4" />
        </Crumb>
        <Crumb $w={271} $ml={19}>SpinningDonutScene</Crumb>
        <Crumb $w={20} $ml={3}>
          <Icon n="right" s={26} />
        </Crumb>
        <Crumb $w={34} $ml={16}>
          <Icon n="ntree" c="#e4e4e4" />
        </Crumb>
        <Crumb $ml={17}>Compositing Nodetree</Crumb>
      </Crumbs>
      <Edge $y={36}>
        <Icon n="right" s={20} />
      </Edge>
      <Edge $right $y={36}>
        <Icon n="left" s={20} />
      </Edge>
    </Canvas>
  </Area>
);
const Channel = styled.div`
  display: flex;
  align-items: center;
  justify-content: center;
  width: 42.300px;
  height: 100%;
  border-left: 1.500px solid #2a2a2a;
  font-size: 34px;
  font-weight: 300;
  color: #c0c0c0;
`;
const Pad12 = styled.div`
  width: 12.500px;
`;
const RLBox = styled.div`
  display: flex;
  width: 326px;
  height: 28px;
  margin: 0 -1px;
  border-radius: 5px;
  overflow: hidden;
  border: 1.500px solid #3d3d3d;
`;
const RLName = styled.div`
  display: flex;
  align-items: center;
  flex: 1;
  padding-left: 9px;
  background: #1d1d1d;
`;

/* ---------- image editor ---------- */
const Round = styled.div`
  position: absolute;
  left: ${(p) => p.$x - 29}px;
  top: ${(p) => p.$y - 29}px;
  z-index: 4;
  display: flex;
  align-items: center;
  justify-content: center;
  width: 58px;
  height: 58px;
  border-radius: 50%;
  background: rgba(24, 24, 24, 0.75);
  color: #e0e0e0;
`;
const ImageWrap = styled.svg`
  display: block;
  width: 1224px;
  height: 856px;
  margin-top: 179px;
  border-top: 3px solid #5e5e5e;
  border-bottom: 3px solid #5e5e5e;
  flex: none;
`;
const rnd = (seed) => {
  let s = seed;
  return () => {
    s = (s * 16807) % 2147483647;
    return s / 2147483647;
  };
};
const seg = (x, y, a, l) => {
  const r = (a * Math.PI) / 180;
  const dx = (Math.cos(r) * l) / 2;
  const dy = (Math.sin(r) * l) / 2;
  return `M${(x - dx).toFixed(1)} ${(y - dy).toFixed(1)}L${(x + dx).toFixed(1)} ${(y + dy).toFixed(1)}`;
};
const BODY =
  "M870 250C960 252 1020 300 1052 372C1085 450 1092 530 1080 610C1066 700 1050 760 1020 820C960 900 900 960 830 1010C790 1035 760 1046 720 1050C650 1050 580 1010 550 960C520 900 512 830 522 760C530 690 548 610 580 540C610 460 640 390 700 330C750 280 810 248 870 250Z";
const BLACKS = [
  [915, 341, -15, 42], [880, 460, -12, 36], [928, 456, 4, 48], [630, 528, -75, 52], [598, 643, 12, 52], [800, 772, -20, 46],
  [910, 690, -28, 66], [633, 900, 82, 56], [675, 485, -80, 30], [683, 436, -80, 28], [794, 687, 0, 12], [625, 458, 10, 24],
  [580, 725, 80, 20], [620, 835, -60, 28], [556, 756, -25, 30], [710, 470, 30, 16], [870, 610, -60, 44], [895, 580, 55, 36],
  [800, 370, 40, 14], [785, 305, 70, 26], [960, 338, 10, 16], [650, 606, 5, 28], [850, 490, 75, 32], [712, 890, -55, 34],
  [600, 510, -70, 20], [640, 440, -70, 30],
];
const GREYS = [
  [805, 285, -65, 66], [735, 315, -50, 40], [770, 300, 10, 28], [838, 268, -60, 24], [828, 345, -74, 64], [872, 315, 84, 48],
  [912, 303, -50, 38], [848, 358, -50, 30], [822, 410, -20, 32], [747, 460, 78, 70], [828, 462, 80, 36], [815, 520, -35, 26],
  [870, 545, -55, 36], [836, 572, -72, 36], [826, 652, 50, 56], [878, 662, 6, 66], [760, 698, -55, 44], [682, 722, 18, 66],
  [736, 748, 12, 36], [668, 768, -50, 44], [702, 784, 50, 38], [680, 806, -72, 58], [642, 808, -52, 36], [600, 750, -70, 58],
  [575, 760, -60, 46], [558, 828, -68, 58], [523, 870, 78, 60], [532, 900, 84, 54], [534, 944, 0, 26], [606, 940, 60, 34],
  [668, 862, 10, 40], [700, 890, -52, 38], [847, 754, 66, 56], [750, 810, 58, 32], [820, 808, 38, 26], [778, 738, -70, 28],
  [622, 672, -50, 24], [532, 700, -70, 40], [528, 730, 80, 40], [534, 654, 20, 16], [518, 768, -60, 30], [524, 822, -30, 30],
  [706, 672, 30, 18], [586, 616, 60, 34], [648, 408, 85, 26], [714, 406, 5, 18], [782, 418, 60, 26], [570, 866, 70, 18],
  [648, 732, -25, 36], [680, 378, 40, 16], [596, 510, -70, 20],
];
const FLOAT1 = [
  [290, 87, -55, 24, 5], [656, 184, -8, 20, 6], [221, 266, 2, 24, 6], [278, 333, -50, 14, 4], [116, 400, -18, 30, 7], [143, 427, 80, 18, 7],
  [1187, 291, 5, 15, 7], [1105, 767, 85, 24, 6], [412, 827, -30, 10, 4], [405, 936, 0, 12, 5], [35, 990, 70, 12, 5], [1236, 1055, 20, 10, 6],
  [1457, 1064, -72, 28, 5], [286, 1100, 0, 8, 3], [128, 1202, -60, 14, 2], [140, 1184, 0, 8, 3], [154, 44, 40, 5, 2],
  [1245, 612, -55, 26, 7], [1260, 620, 20, 12, 4], [1227, 668, 0, 5, 4],
];
const GlossRender = () => {
  const r = rnd(77);
  const cl = Array.from({ length: 46 }, () => [1234 + r() * 44, 598 + r() * 44]);
  return (
    <ImageWrap viewBox="30 36 1523 1274" preserveAspectRatio="none">
      <defs>
        <clipPath id="body">
          <path d={BODY} />
        </clipPath>
        <filter id="b40" x="-50%" y="-50%" width="200%" height="200%">
          <feGaussianBlur stdDeviation="24" />
        </filter>
        <filter id="b16" x="-50%" y="-50%" width="200%" height="200%">
          <feGaussianBlur stdDeviation="12" />
        </filter>
        <filter id="b4" x="-50%" y="-50%" width="200%" height="200%">
          <feGaussianBlur stdDeviation="4" />
        </filter>
        <filter id="grain" x="0" y="0" width="100%" height="100%">
          <feTurbulence type="fractalNoise" baseFrequency="0.7" numOctaves="2" seed="4" />
          <feColorMatrix values="0 0 0 0 0  0 0 0 0 0  0 0 0 0 0  1.8 0 0 0 -0.75" />
        </filter>
      </defs>
      <rect x="30" y="36" width="1523" height="1274" fill="#000" />
      <g clipPath="url(#body)" fill="none" strokeLinecap="round">
        <path d={BODY} fill="#050505" />
        <g filter="url(#b40)">
          <path d="M830 305C740 340 670 440 620 560C590 640 575 700 570 750" stroke="#9a9a9a" strokeWidth="88" />
          <path d="M890 320C915 450 895 560 840 680C780 790 710 860 650 890" stroke="#9a9a9a" strokeWidth="88" />
          <path d="M580 860C600 780 650 780 700 760" stroke="#6a6a6a" strokeWidth="60" />
          <path d="M920 810C970 750 1000 670 1010 580" stroke="#6a6a6a" strokeWidth="56" />
        </g>
        <g filter="url(#b16)">
          <path d="M765 355C680 430 620 540 585 690" stroke="#e6e6e6" strokeWidth="40" />
          <path d="M645 500C610 570 586 640 580 700" stroke="#fff" strokeWidth="54" />
          <path d="M900 375C908 430 902 480 895 520" stroke="#c4c4c4" strokeWidth="46" />
          <path d="M890 490C872 580 832 680 784 765C745 820 708 855 665 878" stroke="#fff" strokeWidth="62" />
          <path d="M925 805C965 760 985 700 992 640" stroke="#a0a0a0" strokeWidth="30" />
          <path d="M825 440C825 480 832 520 832 555C800 640 750 690 722 705C715 640 720 580 750 520Z" fill="#030303" />
          <path d="M820 425C780 500 710 580 700 670" stroke="#151515" strokeWidth="34" />
          <path d="M520 900C560 1000 650 1040 740 1030C860 1000 960 900 1000 840" stroke="#000" strokeWidth="70" />
        </g>
        <path d="M738 610C755 590 765 615 750 650L724 705C720 670 725 630 738 610Z" fill="#565656" filter="url(#b4)" />
        <path d="M820 560C790 585 765 640 750 690C775 670 800 620 820 560Z" fill="#000" stroke="#d8d8d8" strokeWidth="5" strokeDasharray="6 2" />
        <path d="M1076 490C1060 560 1010 600 990 700C985 750 985 780 996 795C1020 790 1060 700 1075 620Z" fill="#4b4b4b" stroke="#0b0b0b" strokeWidth="6" />
        <path d="M990 818C930 830 860 890 830 960L818 1010C880 985 960 900 990 850Z" fill="#262626" stroke="#060606" strokeWidth="6" />
        <path d="M985 790L1020 800L1010 825L980 815Z" fill="#0d0d0d" filter="url(#b4)" />
        <rect x="500" y="240" width="600" height="820" filter="url(#grain)" opacity=".4" />
      </g>
      <g fill="none" strokeLinecap="butt">
        {GREYS.map(([x, y, a, l], i) => (
          <g key={i}>
            <path d={seg(x + 3, y + 3, a, l)} stroke="#0c0c0c" strokeWidth="10" />
            <path d={seg(x, y, a, l)} stroke={["#7d7d7d", "#9c9c9c", "#666"][i % 3]} strokeWidth="8" />
            <path d={seg(x - 1, y - 2, a, l - 4)} stroke="#dcdcdc" strokeWidth="1.500" opacity=".8" />
          </g>
        ))}
        {BLACKS.map(([x, y, a, l], i) => (
          <g key={i}>
            <path d={seg(x, y, a, l)} stroke="#04040c" strokeWidth="12" />
            {i % 2 === 0 && <path d={seg(x, y, a, l * 0.5)} stroke="#8d8d98" strokeWidth="2" />}
          </g>
        ))}
        <path d="M1073 425C1092 520 1082 620 1056 700C1046 750 1030 780 1016 805L1024 820" stroke="#e9e9e9" strokeWidth="5" strokeDasharray="5 2" />
        <path d="M1000 842C960 890 900 960 840 1003C800 1030 770 1044 733 1050" stroke="#c9c9c9" strokeWidth="3" strokeDasharray="5 3" />
        <path d="M870 252C940 256 1000 280 1034 342" stroke="#b5b5b5" strokeWidth="3" strokeDasharray="3 11" />
        <path d="M590 1002C615 1028 640 1044 664 1048" stroke="#b5b5b5" strokeWidth="3" strokeDasharray="4 5" />
        {FLOAT1.map(([x, y, a, l, w], i) => (
          <path key={i} d={seg(x, y, a, l)} stroke="#cfcfcf" strokeWidth={w} strokeDasharray={i % 2 ? "5 2" : "9 1"} />
        ))}
      </g>
      {cl.map(([x, y], i) => (
        <rect key={i} x={x} y={y} width="3" height="3" fill="#bbb" />
      ))}
    </ImageWrap>
  );
};
const ImageEditor = () => (
  <Area $w={1224} $h={1263} $bg="#353535">
    <Header $bg="#303030">
      <Drop n="imgEd" w={67} ml={16} />
      <Group $w={147} $ml={13}>
        <Seg $w={147} $gap={15}>
          <Icon n="img" s={32} />
          View
          <Icon n="down" s={19} />
        </Seg>
      </Group>
      <MenuText $ml={26.500} $w={92}>View</MenuText>
      <MenuText $w={126}>Image</MenuText>
      <Group $w={558}>
        <Seg $w={67}>
          <Icon n="img" s={32} />
          <Icon n="down" s={19} />
        </Seg>
        <Seg $w={263} $bg="#1d1d1d" $j="flex-start" $px={17} $c="#d4d4d4">Viewer Node</Seg>
        <Seg $w={52} $bg={BTN} $div $c="#cfcfcf">4</Seg>
        <Seg $w={44} $bg={BTN} $div>
          <Icon n="shield" />
        </Seg>
        <Seg $w={44} $bg={BTN} $div>
          <Icon n="dup" />
        </Seg>
        <Seg $w={44} $bg={BTN} $div>
          <Icon n="folder" />
        </Seg>
        <Seg $w={44} $bg={BTN}>
          <Icon n="x" s={30} />
        </Seg>
      </Group>
      <Group $w={84} $ml={36}>
        <Seg $w={41} $bg={BLUE}>
          <Icon n="gizmo" />
        </Seg>
        <Seg $w={43}>
          <Icon n="down" s={19} />
        </Seg>
      </Group>
      <Group $w={60} $ml={13.500}>
        <Seg $w={42} $bg={BLUE} $c="#fff">
          <Icon n="overlay" />
        </Seg>
      </Group>
    </Header>
    <GlossRender />
    <Round $x={1174} $y={106}>
      <Icon n="zoom" s={36} />
    </Round>
    <Round $x={1174} $y={172}>
      <Icon n="hand" s={37} />
    </Round>
    <Edge $y={89}>
      <Icon n="right" s={20} />
    </Edge>
    <Edge $right $y={89}>
      <Icon n="left" s={20} />
    </Edge>
  </Area>
);

/* ---------- 3D viewport ---------- */
const Scene3D = styled.svg`
  position: absolute;
  left: 0;
  top: 0;
  width: 1224px;
  height: 1185px;
`;
const ViewInfo = styled.div`
  position: absolute;
  left: 20px;
  top: 73px;
  line-height: 40px;
  font-weight: 500;
  color: #fff;
`;
const GizmoDot = styled.div`
  position: absolute;
  left: ${(p) => p.$x - 18}px;
  top: ${(p) => p.$y - 18}px;
  display: flex;
  align-items: center;
  justify-content: center;
  width: 36px;
  height: 36px;
  border-radius: 50%;
  background: ${(p) => p.$bg};
  border: 3px solid ${(p) => p.$c};
  color: #111;
  font-size: 23px;
  font-weight: 600;
`;
const D3 =
  "M868 607C915 606 960 625 984 670C1002 715 1000 770 990 820C982 870 968 915 950 948C915 985 880 1020 835 1055C800 1078 760 1086 728 1083C690 1082 655 1060 632 1022C612 985 608 940 614 890C620 840 638 790 668 745C700 690 735 655 780 628C810 614 840 607 868 607Z";
const SPR3 = [
  [815, 620, -60, 34], [838, 610, -20, 30], [780, 640, -35, 24], [825, 665, -65, 44], [857, 645, 75, 32], [884, 640, -50, 30], [886, 658, -15, 26],
  [922, 654, -30, 26], [812, 688, 50, 26], [793, 706, 40, 16], [768, 730, 75, 38], [745, 665, -40, 22], [733, 702, 50, 18], [716, 745, -75, 24],
  [742, 740, 30, 14], [686, 776, -65, 26], [706, 820, 5, 26], [894, 729, 3, 36], [858, 735, -25, 26], [818, 706, -20, 20], [838, 760, 70, 22],
  [867, 805, 60, 32], [850, 785, -50, 26], [846, 820, -65, 28], [825, 848, 48, 36], [872, 855, 5, 26], [881, 875, -25, 44], [838, 909, 68, 32],
  [803, 919, -15, 34], [819, 942, 30, 14], [770, 940, 55, 18], [735, 990, -45, 28], [710, 980, 5, 32], [689, 996, 85, 32], [673, 1025, 60, 24],
  [655, 825, 55, 26], [662, 860, 0, 26], [658, 845, 40, 24], [710, 888, 15, 50], [745, 900, -5, 36], [760, 885, -55, 34], [735, 925, -60, 40],
  [720, 925, 60, 34], [700, 935, -50, 34], [685, 900, -60, 30], [665, 905, 60, 26], [650, 893, 70, 26], [640, 915, -45, 32], [630, 940, 40, 34],
  [640, 945, -60, 36], [655, 935, -30, 30], [620, 955, -50, 28], [612, 985, 80, 44], [620, 1000, 85, 34], [622, 1022, 0, 24], [610, 925, 80, 26],
  [622, 890, -60, 24], [622, 850, 10, 16], [634, 825, 70, 20], [650, 775, 50, 20], [642, 970, 50, 22], [695, 890, 30, 22], [815, 770, -20, 22],
  [675, 730, -30, 20], [740, 865, 40, 18], [768, 910, -40, 28], [780, 880, -70, 24],
];
const FL3 = [
  [1021, 149, 35, 40, 9], [1490, 136, -8, 48, 9], [770, 225, 58, 20, 5], [978, 298, 72, 20, 5], [673, 328, 100, 16, 4], [869, 391, 88, 18, 4],
  [423, 457, 98, 28, 6], [451, 508, -45, 12, 5], [353, 483, 20, 6, 5], [400, 616, 8, 14, 5], [440, 656, -10, 9, 6], [327, 696, -14, 20, 6],
  [346, 712, 80, 10, 7], [706, 567, -3, 13, 6], [1075, 631, 15, 10, 6], [1358, 612, 45, 14, 6], [1398, 614, 40, 26, 8], [1484, 673, 62, 18, 6],
  [96, 726, -60, 12, 5], [61, 950, -30, 10, 6], [1017, 916, 88, 14, 6], [1416, 986, 44, 20, 6], [1477, 883, 78, 12, 5], [1108, 1089, 60, 8, 5],
  [1262, 1095, -68, 18, 7], [1505, 1037, -20, 12, 4], [1543, 1073, 85, 16, 4], [340, 1174, -58, 22, 6], [446, 1116, 0, 6, 5], [271, 1049, 40, 6, 4],
  [530, 1017, 0, 5, 5], [533, 951, 40, 7, 4], [1396, 1218, 0, 7, 5], [1359, 1106, 20, 6, 5], [871, 1308, 92, 26, 6], [1200, 1315, -75, 18, 6],
  [1163, 1269, 10, 7, 4], [1128, 1336, -8, 12, 4], [531, 1309, -40, 10, 5], [443, 1349, -42, 18, 5], [516, 1378, -75, 26, 6], [284, 1376, -60, 12, 7],
  [427, 1410, 65, 16, 4], [332, 1366, 0, 5, 5], [330, 1441, 30, 6, 4], [795, 1475, 50, 18, 12], [565, 1511, -8, 16, 4], [797, 1538, -60, 12, 6],
  [855, 1525, 78, 14, 7], [1025, 1518, -65, 22, 6], [1184, 1489, -40, 12, 6], [1233, 1479, 55, 8, 3], [1310, 1537, 60, 14, 6], [1523, 1511, -30, 9, 4],
  [1481, 1545, 60, 14, 7], [57, 1297, 15, 9, 10], [253, 120, -70, 10, 4], [262, 243, 0, 6, 4], [600, 393, 20, 5, 4], [965, 100, 0, 5, 3],
  [1285, 163, 30, 5, 4], [1220, 287, -70, 12, 4], [1140, 252, -10, 7, 4], [1444, 193, 0, 5, 4], [1115, 825, 15, 10, 13], [1126, 826, 5, 10, 8],
  [1103, 857, 0, 4, 4], [1538, 800, 0, 5, 5],
];
const poly = (cx, cy, rx, ry, n = 32) =>
  Array.from({ length: n }, (_, i) => {
    const a = (i / n) * Math.PI * 2;
    return `${cx + Math.cos(a) * rx},${cy + Math.sin(a) * ry}`;
  }).join(" ");
const Lamp = ({ x, y }) => (
  <g fill="none" stroke="#111" strokeWidth="2.200">
    <circle cx={x} cy={y} r="31" strokeDasharray="9 7" />
    <circle cx={x} cy={y} r="20" strokeDasharray="7 6" />
    <path d={`M${x - 8} ${y}L${x} ${y - 8}L${x + 8} ${y}L${x} ${y + 8}Z`} />
    <circle cx={x} cy={y} r="2" />
  </g>
);
const Viewport = () => (
  <Area $w={1224} $h={1185} $bg="#2b2b2b">
    <Scene3D viewBox="30 27 1523 1523" preserveAspectRatio="none">
      <defs>
        <radialGradient id="bgv" cx="50%" cy="52%" r="65%">
          <stop offset="0" stopColor="#303030" />
          <stop offset="1" stopColor="#272727" />
        </radialGradient>
        <linearGradient id="dn" x1="0" y1="0.200" x2="1" y2="0.600">
          <stop offset="0" stopColor="#a3a3a3" />
          <stop offset=".5" stopColor="#a0a0a1" />
          <stop offset=".8" stopColor="#8d8d8e" />
          <stop offset="1" stopColor="#6c6c6d" />
        </linearGradient>
        <clipPath id="d3c">
          <path d={D3} />
        </clipPath>
        <filter id="s20" x="-50%" y="-50%" width="200%" height="200%">
          <feGaussianBlur stdDeviation="16" />
        </filter>
        <filter id="s7" x="-50%" y="-50%" width="200%" height="200%">
          <feGaussianBlur stdDeviation="6" />
        </filter>
        <linearGradient id="camf" x1="0" y1="0" x2="0" y2="1">
          <stop offset="0" stopColor="#393939" />
          <stop offset=".55" stopColor="#3f3f3f" />
          <stop offset="1" stopColor="#3a3a3a" />
        </linearGradient>
      </defs>
      <rect x="30" y="27" width="1523" height="1523" fill="url(#bgv)" />
      <rect x="137" y="474" width="1326" height="771" fill="url(#camf)" />
      <g stroke="#4a4a4a" strokeWidth="2" opacity=".6">
        <path d="M30 858H1553M30 868H1553M30 880H1553M30 895H1553M30 913H1553M30 938H1553M30 970H1553" opacity=".25" />
        <path d="M30 1024L1553 1018M30 1108L1553 1102M30 1287L1553 1280" />
        <path d="M30 1100L570 868M975 908L1553 1246" />
      </g>
      <path d="M678 1070L526 1550" stroke="#5a7a2e" strokeWidth="3.500" />
      <g fill="none" stroke="#131313" strokeWidth="2.600">
        <polygon points={poly(1206, 811, 401, 414)} />
        <polygon points={poly(788, 1169, 200, 207)} />
      </g>
      <path d="M1205 811V1003M788 1080V1169" stroke="#222" strokeWidth="1.500" />
      <g strokeLinecap="round" fill="none">
        {FL3.map(([x, y, a, l, w], i) => (
          <path key={i} d={seg(x, y, a, Math.max(2, l - w))} stroke={x > 137 && x < 1463 && y > 474 && y < 1245 ? "#a0a0a0" : "#757575"} strokeWidth={w + 0.5} />
        ))}
      </g>
      <path d={D3} fill="url(#dn)" />
      <g clipPath="url(#d3c)">
        <g filter="url(#s20)" fill="none">
          <path d="M890 650C860 700 905 800 860 880C820 960 740 1020 680 1040" stroke="#b0b0b1" strokeWidth="50" />
          <path d="M1008 690C1006 850 960 960 830 1080C780 1096 700 1104 630 1050" stroke="#565657" strokeWidth="34" />
          <path d="M745 700C690 770 650 850 640 940" stroke="#ababac" strokeWidth="40" />
          <path d="M828 715C765 725 735 810 738 895" stroke="#747475" strokeWidth="26" />
          <path d="M616 1010C600 950 610 870 640 790" stroke="#7c7c7d" strokeWidth="14" />
        </g>
        <path d="M994 752C960 800 945 850 942 900C940 930 936 940 930 942L960 948C985 900 1000 820 994 752Z" fill="#7d7d7e" stroke="#4e4e4e" strokeWidth="2.500" />
        <path d="M945 950C920 940 880 965 850 1000C830 1030 815 1045 808 1065L850 1050C890 1020 930 980 945 950Z" fill="#727273" stroke="#4e4e4e" strokeWidth="2.500" />
        <path d="M936 935L958 934L955 955L925 952Z" fill="#8b8b8c" />
      </g>
      <path d="M824 766C790 764 765 790 757 830C752 860 748 880 750 895C775 890 800 860 815 820C822 800 824 785 824 766Z" fill="#7c7c7d" stroke="#5c5c5c" strokeWidth="2" />
      <path d="M822 770C805 780 790 800 778 830C768 855 765 875 766 885C785 875 806 845 815 815C820 795 822 785 822 770Z" fill="#4c4c4d" filter="url(#s7)" />
      <path d="M812 792C790 815 772 855 766 886C785 878 803 852 810 828Z" fill="#363636" />
      <path d="M806 810V828" stroke="#111" strokeWidth="2" />
      <g fill="none" strokeLinecap="round">
        {SPR3.map(([x, y, a, l], i) => (
          <g key={i}>
            <path d={seg(x + 1, y + 2.500, a, l - 6)} stroke="#656566" strokeWidth="7" />
            <path d={seg(x, y, a, l - 6)} stroke="#9d9d9e" strokeWidth="6" />
          </g>
        ))}
      </g>
      <rect x="138" y="475" width="1324" height="770" fill="none" stroke="#080808" strokeWidth="3.500" strokeDasharray="6.500 5" />
      <Lamp x={1206} y={811} />
      <Lamp x={788} y={1169} />
      <path d="M697 635L712 668M762 650L735 672M687 681L715 683M738 684L750 686M685 712L708 690M728 698L746 728" stroke="#0a0a0a" strokeWidth="2.500" />
      <circle cx="722" cy="683" r="28" fill="none" stroke="#fff" strokeWidth="3" />
      <circle cx="722" cy="683" r="28" fill="none" stroke="#d63a35" strokeWidth="3" strokeDasharray="11 11" />
      <circle cx="856" cy="850" r="7" fill="#f09a35" stroke="#6a3a0a" strokeWidth="1.500" />
      <path d="M1416 165V222" stroke="#4479d0" strokeWidth="4" />
      <path d="M1440 239H1485" stroke="#c6404f" strokeWidth="4" />
    </Scene3D>
    <Header $bg="rgba(48,48,48,.95)" $pt={5}>
      <Drop n="view3d" w={68} ml={15} />
      <Group $w={240} $ml={12}>
        <Seg $w={240} $gap={15}>
          <Icon n="objmode" s={32} />
          Object Mode
          <Icon n="down" s={19} />
        </Seg>
      </Group>
      <MenuText $ml={27} $w={92}>View</MenuText>
      <MenuText $w={106}>Select</MenuText>
      <MenuText $w={80}>Add</MenuText>
      <MenuText $w={127}>Object</MenuText>
      <Group $w={173}>
        <Seg $w={173} $gap={14}>
          <Icon n="orient" s={32} />
          Global
          <Icon n="down" s={19} />
        </Seg>
      </Group>
      <Drop n="pivot" w={68} ml={13} />
      <Group $w={112} $ml={12}>
        <Seg $w={41} $bg={BTN} $c="#9a9a9a">
          <Icon n="magnet" />
        </Seg>
        <Seg $w={71} $gap={9}>
          <Icon n="square" s={27} />
          <Icon n="down" s={19} />
        </Seg>
      </Group>
      <Group $w={100} $ml={12}>
        <Seg $w={41} $bg={BTN} $c="#a5a5a5">
          <Icon n="prop" />
        </Seg>
        <Seg $w={45}>
          <Icon n="curve" />
        </Seg>
      </Group>
    </Header>
    <ViewInfo>
      Camera Perspective
      <br />
      (74) Env.001 | FloatingSprinkles
    </ViewInfo>
    <GizmoDot $x={1114} $y={95} $bg="#4479d0" $c="#4479d0">Z</GizmoDot>
    <GizmoDot $x={1114.500} $y={166} $bg="#5a6e2c" $c="#84b93a" />
    <GizmoDot $x={1184} $y={165} $bg="#c6404f" $c="#c6404f">X</GizmoDot>
    <GizmoDot $x={1043} $y={165} $bg="#5e3238" $c="#a33b48" />
    <GizmoDot $x={1114} $y={235} $bg="#34496b" $c="#3f68ad" />
    <Round $x={1174} $y={284}>
      <Icon n="zoom" s={36} />
    </Round>
    <Round $x={1174} $y={351}>
      <Icon n="hand" s={37} />
    </Round>
    <Round $x={1174} $y={418}>
      <Icon n="cam" s={36} />
    </Round>
    <Edge $y={87}>
      <Icon n="right" s={20} />
    </Edge>
    <Edge $right $y={87}>
      <Icon n="left" s={20} />
    </Edge>
  </Area>
);

/* ---------- outliner ---------- */
const ORow = styled.div`
  display: flex;
  align-items: center;
  height: 44px;
  padding-left: 42.500px;
  background: ${(p) => (p.$alt ? "#2b2b2b" : "#272727")};
  color: #c6c6c6;
  flex: none;
`;
const Cell = styled.div`
  display: flex;
  align-items: center;
  justify-content: center;
  width: 44px;
  height: 44px;
  color: ${(p) => p.$c || "#dcdcdc"};
  flex: none;
`;
const Guide = styled(Cell)`
  &::before {
    content: "";
    width: 2.500px;
    height: 44px;
    background: #565656;
  }
`;
const Hot = styled.div`
  display: flex;
  align-items: center;
  justify-content: center;
  width: 43px;
  height: 39px;
  border-radius: 8px;
  background: ${(p) => (p.$on ? "#545454" : "transparent")};
`;
const OName = styled.div`
  margin-left: 9px;
`;
const Glyph = styled.span`
  font-family: ${(p) => (p.$serif ? '"DejaVu Serif", serif' : '"DejaVu Sans Light", "DejaVu Sans", sans-serif')};
  font-size: 52px;
  line-height: 36px;
  margin-top: -14px;
`;
const ORight = styled.div`
  display: flex;
  margin-left: auto;
  margin-right: 19px;
`;
const ROWS = [
  [0, null, "coll", "Scene Collection", []],
  [0, "triD", "coll", "Env.001", ["c"], { hot: 1 }],
  [1, "triR", "cam", "Camera.Spin", [], { d: ["path", "camData*"] }],
  [1, "triR", "bulb", "FillLight", [], { d: ["lampData"] }],
  [1, "triR", "tri", "FloatingSprinkles", [], { hot: 1, d: ["wrenchO", "mesh"] }],
  [1, "triR", "bulb", "KeyLight", [], { d: ["lampData"] }],
  [1, "triR", "bulb", "RimLight", [], { d: ["lampData"] }],
  [1, "triR", "bulb", "RimLightBottom", [], { d: ["lampData"] }],
  [1, "triR", "font", "Text.001", [], { d: ["font"] }],
  [0, "triD", "coll", "Sprinkles.001", ["c"]],
  [1, "triD", "coll", "Long.001", ["c"]],
  [2, "triR", "tri", "Cylinder.008", [], { d: ["mesh"] }],
  [2, "triR", "tri", "Cylinder.009", [], { d: ["mesh"] }],
  [2, "triR", "tri", "Cylinder.010", [], { d: ["mesh"] }],
  [2, "triR", "tri", "Cylinder.011", [], { d: ["mesh"] }],
  [1, "triD", "coll", "Round.001", ["c"]],
  [2, "triR", "tri", "RoundSprinkle.002", [], { d: ["mesh"] }],
  [1, "triD", "coll", "MixedSprinkles", ["c"]],
];
const DataIcon = ({ n }) => {
  if (n === "font")
    return (
      <Cell $c={GREEN}>
        <Glyph>a</Glyph>
      </Cell>
    );
  const hot = n.endsWith("*");
  const name = n.replace("*", "");
  const c = name === "path" ? "#b0b0b0" : name === "wrenchO" ? INDIGO : GREEN;
  return (
    <Cell $c={c}>
      <Hot $on={hot}>
        <Icon n={name} />
      </Hot>
    </Cell>
  );
};
const Search = styled.div`
  display: flex;
  align-items: center;
  width: ${(p) => p.$w}px;
  height: ${(p) => p.$h}px;
  margin-left: ${(p) => p.$ml}px;
  padding-left: 10px;
  border-radius: 8px;
  background: #1d1d1d;
  box-shadow: inset 0 0 0 2px #373737;
  color: #c8c8c8;
`;
const DataSlot = styled.div`
  display: flex;
  margin-left: 45px;
`;
const Outliner = () => (
  <Area $w={821} $h={820} $bg="#282828">
    <Header $bg="#2c2c2c" $h={57} $pt={5}>
      <Drop n="outl" w={68} ml={17} />
      <Drop n="layers" w={68} ml={13} />
      <Search $w={252} $h={43} $ml={95}>
        <Icon n="search" />
      </Search>
      <Fill />
      <Drop n="filter" w={68} />
      <Group $w={42} $ml={13} $bg="#474747" $line="#474747">
        <Seg $w={42} $c="#bdbdbd">
          <Icon n="newcol" />
        </Seg>
      </Group>
      <HeadPad />
    </Header>
    {ROWS.map(([lv, tri, ic, name, flags, o = {}], i) => {
      const col = ic !== "coll";
      return (
        <ORow key={i} $alt={i % 2 === 0}>
          {Array.from({ length: lv }, (_, k) => (
            <Guide key={k} />
          ))}
          {tri && (
            <Cell $c="#b5b5b5">
              <Icon n={tri} s={23} />
            </Cell>
          )}
          <Cell $c={col ? ORANGE : "#dcdcdc"}>
            {ic === "font" ? (
              <Glyph $serif>a</Glyph>
            ) : (
              <Hot $on={o.hot}>
                <Icon n={ic} s={34} />
              </Hot>
            )}
          </Cell>
          <OName>{name}</OName>
          {o.d && (
            <DataSlot>
              {o.d.map((d) => (
                <DataIcon key={d} n={d} />
              ))}
            </DataSlot>
          )}
          {i > 0 && (
            <ORight>
              {flags.length > 0 && (
                <Cell>
                  <Icon n="boxcheck" s={31} />
                </Cell>
              )}
              <Cell>
                <Icon n="eye" s={31} />
              </Cell>
              <Cell>
                <Icon n="photo" s={32} />
              </Cell>
            </ORight>
          )}
        </ORow>
      );
    })}
    <ScrollV $x={807} $y={76} $w={8} $h={331} />
  </Area>
);
const HeadPad = styled.div`
  width: ${(p) => p.$w || 17}px;
`;

/* ---------- properties ---------- */
const PBody = styled.div`
  display: flex;
  flex: 1;
`;
const Tabs = styled.nav`
  display: flex;
  flex-direction: column;
  width: 60px;
  height: 1790px;
  padding: 17px 0 0 4px;
  background: #1d1d1d;
`;
const PTab = styled.div`
  display: flex;
  align-items: center;
  justify-content: center;
  height: 56px;
  margin: 2px 0;
  border-radius: 8px 0 0 8px;
  background: ${(p) => (p.$on ? "#303030" : "transparent")};
  color: ${(p) => p.$c};
`;
const TabRule = styled.div`
  height: 2px;
  margin: 7px 3px 6px;
  background: #181818;
`;
const Panels = styled.div`
  display: flex;
  flex-direction: column;
  width: 725.500px;
  margin-left: 16.500px;
`;
const Panel = styled.div`
  display: flex;
  flex-direction: column;
  background: #353535;
  border-radius: 0 0 8px 8px;
  padding: ${(p) => p.$pt}px 0 ${(p) => p.$pb}px;
`;
const PanelHead = styled.div`
  display: flex;
  align-items: center;
  gap: 12px;
  height: 54px;
  padding-left: 47px;
  background: #3c3c3c;
  padding-top: 3px;
`;
const PRow = styled.div`
  display: flex;
  align-items: center;
  height: ${(p) => p.$h || 44}px;
  margin-top: ${(p) => p.$mt || 0}px;
  color: ${(p) => (p.$dim ? "#767676" : "#dcdcdc")};
`;
const PLabel = styled.div`
  width: 282.500px;
  margin-right: 20.500px;
  text-align: right;
  flex: none;
`;
const PName = styled.div`
  margin-left: 8px;
`;
const Slider = styled.div`
  display: flex;
  align-items: center;
  justify-content: center;
  width: 404px;
  height: 41px;
  border-radius: 8px;
  background: ${(p) => p.$bg};
`;
const ListRow = styled.div`
  display: flex;
  gap: 19px;
  padding-left: 17.500px;
`;
const List = styled.div`
  display: flex;
  align-items: flex-end;
  width: 630px;
  height: 171px;
  padding: 0 0 9px 20px;
  border-radius: 8px;
  background: #282828;
  border: 2px solid #3c3c3c;
  color: #c4c4c4;
`;
const Grip = styled.div`
  width: 27px;
  height: 12px;
  margin: 0 0 4px 281px;
  background: radial-gradient(circle at 2px 2px, #b0b0b0 0 1.500px, transparent 2px) 0 0 / 6.500px 7px;
`;
const PM = styled.div`
  display: flex;
  align-items: center;
  justify-content: center;
  width: 41px;
  height: ${(p) => p.$h}px;
  margin-bottom: 2px;
  background: #545454;
  border-radius: ${(p) => p.$r};
`;
const CRow = ({ l, t, on, dim, mt, h }) => (
  <PRow $mt={mt} $dim={dim} $h={h}>
    <PLabel>{l}</PLabel>
    <Check $s={28.500} $on={on} $dim={dim}>
      {on && <Icon n="check" s={23} />}
    </Check>
    <PName>{t}</PName>
  </PRow>
);
const PHead = ({ t }) => (
  <PanelHead>
    <Icon n="chev" s={19} c="#a8a8a8" />
    {t}
  </PanelHead>
);
const TABS = [
  ["tool", "#a8a8a8"], null,
  ["render", "#a8a8a8"], ["output", "#a8a8a8"], ["layers", "#dedede", 1], ["scene", "#a8a8a8"], ["world", RED], null,
  ["collO", "#b5b5b5"], null,
  ["object", ORANGE], ["wrench", INDIGO], ["particles", INDIGO], ["physics", INDIGO], ["constraints", INDIGO], ["mesh", GREEN], ["material", RED], null,
  ["texture", RED],
];
const Properties = () => (
  <Area $w={821} $h={1844} $bg="#303030">
    <Header $bg="#303030" $h={53.500} $pt={5}>
      <Drop n="propEd" w={68} ml={17} />
      <Search $w={251} $h={41} $ml={203}>
        <Icon n="search" />
      </Search>
      <Fill />
      <Group $w={42} $h={41}>
        <Seg $w={42}>
          <Icon n="down" s={21} />
        </Seg>
      </Group>
      <HeadPad />
    </Header>
    <PBody>
      <Tabs>
        {TABS.map((t, i) =>
          t ? (
            <PTab key={i} $on={t[2]} $c={t[1]}>
              <Icon n={t[0]} s={33} />
            </PTab>
          ) : (
            <TabRule key={i} />
          )
        )}
      </Tabs>
      <Panels>
        <Panel $pt={2} $pb={15.500}>
          <CRow t="Position" />
          <CRow t="Normal" />
          <CRow t="Vector" dim />
          <CRow t="UV" />
          <CRow t="Denoising Data" />
          <CRow l="Indexes" t="Object Index" mt={9.700} />
          <CRow t="Material Index" />
          <CRow l="Debug" t="Sample Count" mt={10} />
          <PRow $mt={10}>
            <PLabel>Alpha Threshold</PLabel>
            <Slider $bg={`linear-gradient(90deg, ${BLUE} 50%, #545454 50%)`}>0.500</Slider>
          </PRow>
        </Panel>
        <PHead t="Light" />
        <Panel $pt={15.500} $pb={17}>
          <CRow l="Diffuse" t="Direct" />
          <CRow t="Indirect" />
          <CRow t="Color" />
          <CRow l="Glossy" t="Direct" on mt={10} />
          <CRow t="Indirect" />
          <CRow t="Color" />
          <CRow l="Transmission" t="Direct" mt={10} />
          <CRow t="Indirect" />
          <CRow t="Color" />
          <CRow l="Volume" t="Direct" mt={10.500} />
          <CRow t="Indirect" />
          <CRow l="Other" t="Emission" mt={9.500} />
          <CRow t="Environment" />
          <CRow t="Ambient Occlusion" />
          <CRow t="Shadow Catcher" />
        </Panel>
        <PHead t="Cryptomatte" />
        <Panel $pt={13.700} $pb={15}>
          <CRow t="Object" h={48} />
          <CRow t="Material" h={48} />
          <CRow t="Asset" h={48} />
          <PRow $mt={8.500} $dim>
            <PLabel>Levels</PLabel>
            <Slider $bg="#444">6</Slider>
          </PRow>
        </Panel>
        <PHead t="Shader AOV" />
        <Panel $pt={18.500} $pb={17}>
          <ListRow>
            <List>
              <Icon n="triR" s={22} />
              <Grip />
            </List>
            <div>
              <PM $h={40} $r="8px 8px 0 0">
                <Icon n="plus" s={23} />
              </PM>
              <PM $h={42} $r="0 0 8px 8px">
                <Icon n="minus" s={23} />
              </PM>
            </div>
          </ListRow>
        </Panel>
        <PanelHead />
      </Panels>
    </PBody>
    <ScrollV $x={809} $y={411} $w={7} $h={1147} />
  </Area>
);

/* ---------- timeline ---------- */
const Ruler = styled.div`
  position: relative;
  height: 51px;
  background: #1d1d1d;
  color: #a2a2a2;
  flex: none;
`;
const Tick = styled.span`
  position: absolute;
  top: 14px;
  transform: translateX(-50%);
`;
const Head = styled.div`
  position: absolute;
  left: 1217px;
  top: 5px;
  display: flex;
  align-items: center;
  justify-content: center;
  width: 52px;
  height: 40px;
  border-radius: 8px;
  background: ${BLUE};
  color: #fff;
  z-index: 2;
`;
const HeadLine = styled.div`
  position: absolute;
  left: 1242.500px;
  top: 95px;
  width: 3px;
  height: 116px;
  background: ${BLUE};
`;
const Track = styled.div`
  position: relative;
  height: 105px;
  background: #222;
  padding-left: 148px;
  overflow: hidden;
`;
const Range = styled.div`
  width: 3588px;
  height: 105px;
  background: #303030;
  border-left: 2px solid #111;
`;
const Grid = styled.div`
  position: absolute;
  inset: 0;
  background: repeating-linear-gradient(90deg, #1a1a1a 0 2px, transparent 2px 150.100px) 132px 0,
    repeating-linear-gradient(90deg, #292929 0 2px, transparent 2px 150.100px) 57px 0;
  background-repeat: no-repeat;
`;
const HScroll = styled.div`
  position: absolute;
  left: 16px;
  top: 186px;
  display: flex;
  justify-content: space-between;
  align-items: center;
  width: 3994px;
  height: 18px;
  border-radius: 9px;
  background: #565656;
`;
const Knob2 = styled.i`
  width: 15px;
  height: 15px;
  margin: 0 1px;
  border-radius: 50%;
  background: #3a3a3a;
  border: 2px solid #8a8a8a;
`;
const NumBox = styled.div`
  display: flex;
  align-items: center;
  justify-content: ${(p) => p.$j || "center"};
  width: ${(p) => p.$w}px;
  height: 41px;
  margin-left: ${(p) => p.$ml || 0}px;
  padding: 0 ${(p) => p.$px || 0}px;
  background: #545454;
  border-radius: ${(p) => p.$r || "8px"};
  flex: none;
`;
const Timeline = () => (
  <Area $w={4034} $h={210.500} $bg="#1d1d1d">
    <Header $bg="#303030" $h={54.500} $pt={7}>
      <Drop n="clock" w={66} ml={17} />
      <Group $w={292} $ml={14}>
        <Seg $w={159} $div $gap={12}>
          Playback
          <Icon n="down" s={19} />
        </Seg>
        <Seg $w={133} $gap={10}>
          Keying
          <Icon n="down" s={19} />
        </Seg>
      </Group>
      <MenuText $ml={22} $w={91}>View</MenuText>
      <MenuText $w={1314}>Marker</MenuText>
      <Group $w={82} $bg="#2b2b2b" $line="#2b2b2b">
        <Seg $w={42} $bg={BTN}>
          <Icon n="rec" s={32} />
        </Seg>
        <Seg $w={40} $c="#555">
          <Icon n="down" s={19} />
        </Seg>
      </Group>
      <Group $w={259} $ml={16} $bg={BTN} $line={BTN}>
        {["first", "prevk", "playr", "play", "nextk", "last"].map((n) => (
          <Seg key={n} $w={43.150} $div={n !== "last"}>
            <Icon n={n} s={31} />
          </Seg>
        ))}
      </Group>
      <Fill />
      <NumBox $w={156}>74</NumBox>
      <Group $w={44} $ml={14}>
        <Seg $w={44}>
          <Icon n="stopw" s={32} />
        </Seg>
      </Group>
      <NumBox $w={190} $ml={1} $j="space-between" $px={34} $r="0">
        <span>Start</span>
        <span>1</span>
      </NumBox>
      <NumBox $w={190} $ml={2} $j="space-between" $px={30} $r="0 8px 8px 0">
        <span>End</span>
        <span>240</span>
      </NumBox>
      <HeadPad $w={14} />
    </Header>
    <Ruler>
      {Array.from({ length: 26 }, (_, i) => (
        <Tick key={i} style={{ left: 133 + 150.1 * i }}>
          {i * 10}
        </Tick>
      ))}
      <Head>74</Head>
    </Ruler>
    <Track>
      <Range />
      <Grid />
    </Track>
    <HeadLine />
    <HScroll>
      <Knob2 />
      <Knob2 />
    </HScroll>
    <Edge $y={91}>
      <Icon n="right" s={20} />
    </Edge>
    <Edge $right $y={91}>
      <Icon n="left" s={20} />
    </Edge>
  </Area>
);
const Status = styled.footer`
  display: flex;
  align-items: center;
  height: 45px;
  padding: 2px 32px 0 21px;
  color: #929292;
`;
const Slot = styled.div`
  display: flex;
  align-items: center;
  gap: 14px;
  width: ${(p) => p.$w}px;
`;

const TABW = [
  ["Layout", 121.500], ["Modeling", 150], ["Sculpting", 153], ["UV Editing", 162], ["Texture Paint", 194.500], ["Shading", 138.500],
  ["Animation", 158], ["Rendering", 160], ["Compositing", 188], ["Geometry Nodes", 238], ["Scripting", 143],
];
const AddTab = styled(Tab)`
  color: #b0b0b0;
`;

export default function App() {
  return (
    <Desktop>
      <Global />
      <Win>
        <TitleBar>
          <Light $c="#ec6a5e" $dot="#8c1a10" />
          <Light $c="#f4bf4f" />
          <Light $c="#61c554" />
          <Title>
            <Icon n="file" s={27} />
            * Donut - Blender 4.0
          </Title>
        </TitleBar>
        <TopBar>
          <MenuText $ml={21} $w={57}>
            <Icon n="logo" s={35} />
          </MenuText>
          <MenuText $w={76}>File</MenuText>
          <MenuText $w={78}>Edit</MenuText>
          <MenuText $w={115}>Render</MenuText>
          <MenuText $w={129}>Window</MenuText>
          <MenuText $w={105}>Help</MenuText>
          {TABW.map(([t, w]) => (
            <Tab key={t} $w={w} $on={t === "Compositing"}>
              {t}
            </Tab>
          ))}
          <AddTab $w={50}>
            <Icon n="plus" s={23} />
          </AddTab>
          <Fill />
          <Group $w={428} $line="#333">
            <Seg $w={69} $div>
              <Icon n="scene" />
              <Icon n="down" s={19} />
            </Seg>
            <Seg $w={271} $bg="#1d1d1d" $px={16} $j="space-between" $c="#d4d4d4">
              SpinningDonut...
              <Icon n="pin" s={30} c="#6d6d6d" />
            </Seg>
            <Seg $w={44} $bg={BTN} $div>
              <Icon n="dup" />
            </Seg>
            <Seg $w={44} $bg={BTN}>
              <Icon n="x" s={30} />
            </Seg>
          </Group>
          <Group $w={420.500} $ml={12} $line="#333">
            <Seg $w={68} $div>
              <Icon n="layers" />
              <Icon n="down" s={19} />
            </Seg>
            <Seg $w={265} $bg="#1d1d1d" $px={17} $j="flex-start" $c="#d4d4d4">ViewLayer</Seg>
            <Seg $w={44} $bg={BTN}>
              <Icon n="dup" />
            </Seg>
            <Seg $w={43.500} $bg="#2b2b2b" $c="#5e5e5e">
              <Icon n="x" s={30} />
            </Seg>
          </Group>
          <TopPad />
        </TopBar>
        <Main>
          <Col $w={4034} $gap={5.500}>
            <Row $gap={8} $h={2455}>
              <NodeEditor />
              <Col $w={1224} $gap={7}>
                <ImageEditor />
                <Viewport />
              </Col>
            </Row>
            <Timeline />
          </Col>
          <Col $w={821} $gap={6}>
            <Outliner />
            <Properties />
          </Col>
        </Main>
        <Status>
          <Slot $w={425}>
            <Icon n="mouseL" s={36} />
            Select (Toggle)
          </Slot>
          <Slot $w={425}>
            <Icon n="mouseM" s={36} />
          </Slot>
          <Slot $w={425}>
            <Icon n="mouseR" s={36} />
          </Slot>
          <Fill />
          4.0.2
        </Status>
      </Win>
    </Desktop>
  );
}
const TopPad = styled.div`
  width: 18px;
`;
